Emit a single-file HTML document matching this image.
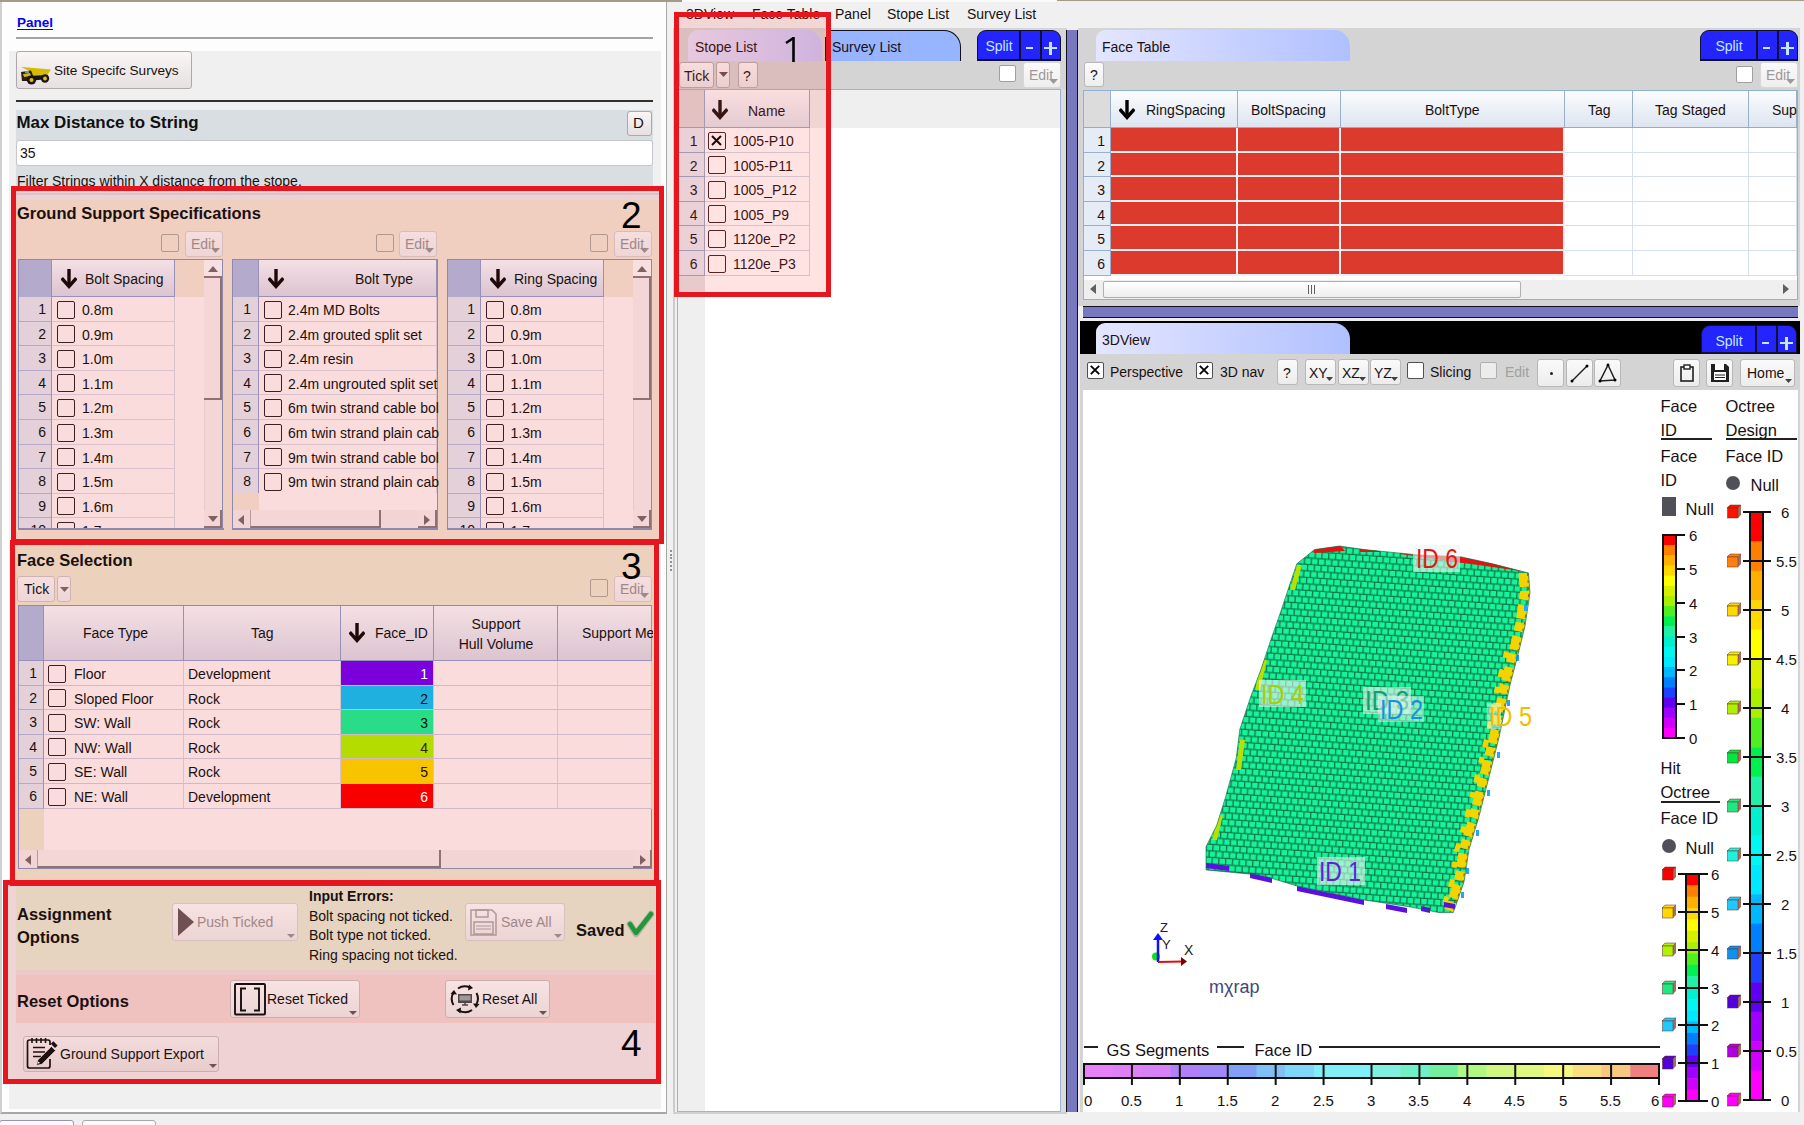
<!DOCTYPE html><html><head><meta charset="utf-8"><style>
*{margin:0;padding:0;box-sizing:border-box}
html,body{width:1804px;height:1125px;overflow:hidden;background:#f0f0f0;font-family:"Liberation Sans",sans-serif;font-size:14px;color:#1a1010}
div{position:absolute}
.t{white-space:nowrap;line-height:16px}
.b{font-weight:bold}
.btn{border:1px solid #b0a8a8;border-radius:3px;background:linear-gradient(#faf6f6,#e6e0e0)}
.cb{border:1.5px solid #3a2020;border-radius:2px}
.dd::after{content:"";position:absolute;right:2px;bottom:3px;border-left:4px solid transparent;border-right:4px solid transparent;border-top:4px solid #a09090}
</style></head><body>
<div style="left:0px;top:0px;width:682px;height:2px;background:#a49a86"></div>
<div style="left:682px;top:0px;width:375px;height:2px;background:#fafafa"></div>
<div style="left:1057px;top:0px;width:747px;height:1px;background:#a49a86"></div>
<div style="left:0px;top:2px;width:667px;height:1112px;background:#fdfdfd;border-right:1px solid #a8a8a8;border-left:2px solid #d0d0d0;border-bottom:2px solid #a8a8a8"></div>
<div class="t" style="left:17px;top:15px;color:#0000ff;font-weight:bold;font-size:13.5px;text-decoration:underline;text-underline-offset:2px">Panel</div>
<div style="left:16px;top:37px;width:637px;height:2px;background:#a0a4a4"></div>
<div style="left:9px;top:51px;width:652px;height:1058px;background:#f0f0f0"></div>
<div class="btn" style="left:16px;top:51px;width:176px;height:38px;"></div>
<div class="t" style="left:54px;top:63px;font-size:13.6px">Site Specifc Surveys</div>
<svg style="position:absolute;left:20px;top:66px" width="32" height="19" viewBox="0 0 32 19"><path d="M1 1 L8 1.5 L31 3.5 L26 11 L13 12 L9 5 Z" fill="#d4bc00"/><path d="M1 6 L11 4.5 L14 12 L13 15 L2 15 Z" fill="#2a1c1c"/><path d="M3 8 L10 7 L11 10 L4 11Z" fill="#d4bc00"/><path d="M5 5 L9 5 L9 7 L5 7Z" fill="#7090c0"/><path d="M8 10 L28 9 L28 13 L8 15Z" fill="#1c1414"/><circle cx="11.5" cy="14" r="4.6" fill="#1c1414"/><circle cx="11.5" cy="14" r="2" fill="#e0c400"/><circle cx="25" cy="12.5" r="4.2" fill="#1c1414"/><circle cx="25" cy="12.5" r="1.9" fill="#e0c400"/></svg>
<div style="left:16px;top:100px;width:637px;height:2px;background:#303030"></div>
<div style="left:16px;top:110px;width:637px;height:76px;background:#d8dee2"></div>
<div class="t" style="left:16.5px;top:113px;font-size:16.9px;font-weight:bold;line-height:20px;color:#101010">Max Distance to String</div>
<div class="btn" style="left:627px;top:111px;width:25px;height:25px;"></div>
<div class="t" style="left:633px;top:115px;font-size:15px">D</div>
<div style="left:16px;top:140px;width:637px;height:26px;background:#fff;border:1px solid #c4c8cc;border-radius:3px"></div>
<div class="t" style="left:20px;top:145px;font-size:14px">35</div>
<div class="t" style="left:17px;top:173px;font-size:14px">Filter Strings within X distance from the stope.</div>
<div style="left:16px;top:191px;width:643px;height:348px;background:#f0cfc0"></div>
<div style="left:16px;top:191px;width:643px;height:9px;background:#ecd2d4"></div>
<div style="left:16px;top:193px;width:643px;height:1.5px;background:#d8c4cc"></div>
<div class="t" style="left:17px;top:203px;font-size:16.5px;font-weight:bold;line-height:20px">Ground Support Specifications</div>
<div class="t" style="left:621px;top:197px;font-size:37px;line-height:37px;color:#000;z-index:5">2</div>
<div style="left:161px;top:234px;width:18px;height:18px;border:1.5px solid #b09890;border-radius:2px;background:transparent"></div>
<div style="left:185px;top:231px;width:38px;height:26px;background:linear-gradient(#f6dede,#eed6d6);border:1px solid #d8bcbc;border-radius:3px"></div><div class="t" style="left:191px;top:236px;color:#a08888;font-size:14px">Edit</div><svg style="position:absolute;left:211px;top:248px" width="9" height="5"><path d="M0 0 L9 0 L4.5 5Z" fill="#a08888"/></svg>
<div style="left:376px;top:234px;width:18px;height:18px;border:1.5px solid #b09890;border-radius:2px;background:transparent"></div>
<div style="left:399px;top:231px;width:38px;height:26px;background:linear-gradient(#f6dede,#eed6d6);border:1px solid #d8bcbc;border-radius:3px"></div><div class="t" style="left:405px;top:236px;color:#a08888;font-size:14px">Edit</div><svg style="position:absolute;left:425px;top:248px" width="9" height="5"><path d="M0 0 L9 0 L4.5 5Z" fill="#a08888"/></svg>
<div style="left:590px;top:234px;width:18px;height:18px;border:1.5px solid #b09890;border-radius:2px;background:transparent"></div>
<div style="left:614px;top:231px;width:38px;height:26px;background:linear-gradient(#f6dede,#eed6d6);border:1px solid #d8bcbc;border-radius:3px"></div><div class="t" style="left:620px;top:236px;color:#a08888;font-size:14px">Edit</div><svg style="position:absolute;left:640px;top:248px" width="9" height="5"><path d="M0 0 L9 0 L4.5 5Z" fill="#a08888"/></svg>
<div style="left:18px;top:259px;width:206px;height:271px;overflow:hidden;"><div style="left:-18px;top:-259px;width:1804px;height:1125px"><div style="left:18px;top:259px;width:205px;height:270px;background:#fadcdc;border:1px solid #8c88b0"></div><div style="left:18px;top:259px;width:205px;height:270px;background:#f0cfc0;border:1px solid #8c88b0;overflow:hidden"></div><div style="left:19px;top:260px;width:33px;height:37px;background:#b4aacc;border-right:1px solid #9890b8"></div><div style="left:52px;top:260px;width:123px;height:37px;background:linear-gradient(#f4e0e4,#dcc4d0);border-right:1px solid #9890b8;border-bottom:1px solid #9890b8"></div><svg style="position:absolute;left:61px;top:268px" width="16" height="22" viewBox="0 0 16 22"><path d="M8 1 V18" stroke="#200808" stroke-width="3.4"/><path d="M1.8 11.5 L8 18.5 L14.2 11.5" stroke="#200808" stroke-width="3.4" fill="none" stroke-linejoin="miter" stroke-linecap="square"/></svg><div class="t" style="left:85px;top:271px;font-size:14px">Bolt Spacing</div><div style="left:19px;top:297.0px;width:33px;height:24.6px;background:#e4d0d8;border-right:1px solid #9890b8;border-bottom:1px solid #b8a8c8"></div><div class="t" style="left:19px;top:301.0px;width:27px;text-align:right;font-size:14px">1</div><div style="left:52px;top:297.0px;width:123px;height:24.6px;background:#fadcdc;border-right:1px solid #d8c0cc;border-bottom:1px solid #d8c0cc"></div><div style="left:57px;top:300.5px;width:18px;height:18px;border:1.5px solid #3a2020;border-radius:2px;background:transparent"></div><div class="t" style="left:82px;top:302.0px;font-size:14px">0.8m</div><div style="left:19px;top:321.6px;width:33px;height:24.6px;background:#e4d0d8;border-right:1px solid #9890b8;border-bottom:1px solid #b8a8c8"></div><div class="t" style="left:19px;top:325.6px;width:27px;text-align:right;font-size:14px">2</div><div style="left:52px;top:321.6px;width:123px;height:24.6px;background:#fadcdc;border-right:1px solid #d8c0cc;border-bottom:1px solid #d8c0cc"></div><div style="left:57px;top:325.1px;width:18px;height:18px;border:1.5px solid #3a2020;border-radius:2px;background:transparent"></div><div class="t" style="left:82px;top:326.6px;font-size:14px">0.9m</div><div style="left:19px;top:346.2px;width:33px;height:24.6px;background:#e4d0d8;border-right:1px solid #9890b8;border-bottom:1px solid #b8a8c8"></div><div class="t" style="left:19px;top:350.2px;width:27px;text-align:right;font-size:14px">3</div><div style="left:52px;top:346.2px;width:123px;height:24.6px;background:#fadcdc;border-right:1px solid #d8c0cc;border-bottom:1px solid #d8c0cc"></div><div style="left:57px;top:349.7px;width:18px;height:18px;border:1.5px solid #3a2020;border-radius:2px;background:transparent"></div><div class="t" style="left:82px;top:351.2px;font-size:14px">1.0m</div><div style="left:19px;top:370.8px;width:33px;height:24.6px;background:#e4d0d8;border-right:1px solid #9890b8;border-bottom:1px solid #b8a8c8"></div><div class="t" style="left:19px;top:374.8px;width:27px;text-align:right;font-size:14px">4</div><div style="left:52px;top:370.8px;width:123px;height:24.6px;background:#fadcdc;border-right:1px solid #d8c0cc;border-bottom:1px solid #d8c0cc"></div><div style="left:57px;top:374.3px;width:18px;height:18px;border:1.5px solid #3a2020;border-radius:2px;background:transparent"></div><div class="t" style="left:82px;top:375.8px;font-size:14px">1.1m</div><div style="left:19px;top:395.4px;width:33px;height:24.6px;background:#e4d0d8;border-right:1px solid #9890b8;border-bottom:1px solid #b8a8c8"></div><div class="t" style="left:19px;top:399.4px;width:27px;text-align:right;font-size:14px">5</div><div style="left:52px;top:395.4px;width:123px;height:24.6px;background:#fadcdc;border-right:1px solid #d8c0cc;border-bottom:1px solid #d8c0cc"></div><div style="left:57px;top:398.9px;width:18px;height:18px;border:1.5px solid #3a2020;border-radius:2px;background:transparent"></div><div class="t" style="left:82px;top:400.4px;font-size:14px">1.2m</div><div style="left:19px;top:420.0px;width:33px;height:24.6px;background:#e4d0d8;border-right:1px solid #9890b8;border-bottom:1px solid #b8a8c8"></div><div class="t" style="left:19px;top:424.0px;width:27px;text-align:right;font-size:14px">6</div><div style="left:52px;top:420.0px;width:123px;height:24.6px;background:#fadcdc;border-right:1px solid #d8c0cc;border-bottom:1px solid #d8c0cc"></div><div style="left:57px;top:423.5px;width:18px;height:18px;border:1.5px solid #3a2020;border-radius:2px;background:transparent"></div><div class="t" style="left:82px;top:425.0px;font-size:14px">1.3m</div><div style="left:19px;top:444.6px;width:33px;height:24.6px;background:#e4d0d8;border-right:1px solid #9890b8;border-bottom:1px solid #b8a8c8"></div><div class="t" style="left:19px;top:448.6px;width:27px;text-align:right;font-size:14px">7</div><div style="left:52px;top:444.6px;width:123px;height:24.6px;background:#fadcdc;border-right:1px solid #d8c0cc;border-bottom:1px solid #d8c0cc"></div><div style="left:57px;top:448.1px;width:18px;height:18px;border:1.5px solid #3a2020;border-radius:2px;background:transparent"></div><div class="t" style="left:82px;top:449.6px;font-size:14px">1.4m</div><div style="left:19px;top:469.20000000000005px;width:33px;height:24.6px;background:#e4d0d8;border-right:1px solid #9890b8;border-bottom:1px solid #b8a8c8"></div><div class="t" style="left:19px;top:473.20000000000005px;width:27px;text-align:right;font-size:14px">8</div><div style="left:52px;top:469.20000000000005px;width:123px;height:24.6px;background:#fadcdc;border-right:1px solid #d8c0cc;border-bottom:1px solid #d8c0cc"></div><div style="left:57px;top:472.70000000000005px;width:18px;height:18px;border:1.5px solid #3a2020;border-radius:2px;background:transparent"></div><div class="t" style="left:82px;top:474.20000000000005px;font-size:14px">1.5m</div><div style="left:19px;top:493.8px;width:33px;height:24.6px;background:#e4d0d8;border-right:1px solid #9890b8;border-bottom:1px solid #b8a8c8"></div><div class="t" style="left:19px;top:497.8px;width:27px;text-align:right;font-size:14px">9</div><div style="left:52px;top:493.8px;width:123px;height:24.6px;background:#fadcdc;border-right:1px solid #d8c0cc;border-bottom:1px solid #d8c0cc"></div><div style="left:57px;top:497.3px;width:18px;height:18px;border:1.5px solid #3a2020;border-radius:2px;background:transparent"></div><div class="t" style="left:82px;top:498.8px;font-size:14px">1.6m</div><div style="left:19px;top:518.4px;width:33px;height:24.6px;background:#e4d0d8;border-right:1px solid #9890b8;border-bottom:1px solid #b8a8c8"></div><div class="t" style="left:19px;top:522.4px;width:27px;text-align:right;font-size:14px">10</div><div style="left:52px;top:518.4px;width:123px;height:24.6px;background:#fadcdc;border-right:1px solid #d8c0cc;border-bottom:1px solid #d8c0cc"></div><div style="left:57px;top:521.9px;width:18px;height:18px;border:1.5px solid #3a2020;border-radius:2px;background:transparent"></div><div class="t" style="left:82px;top:523.4px;font-size:14px">1.7m</div><div style="left:175px;top:260px;width:29px;height:37px;background:#f0cfc0"></div><div style="left:175px;top:297px;width:29px;height:232px;background:#fadcdc"></div><div style="left:204px;top:260px;width:18px;height:268px;background:#f4d6d6;border-left:1px solid #e8c8c8"></div><div style="left:204px;top:260px;width:18px;height:18px;background:#f8e0e0;border-bottom:2px solid #907070"></div><svg style="position:absolute;left:208px;top:266px" width="10" height="6"><path d="M0 6 L10 6 L5 0Z" fill="#806060"/></svg><div style="left:204px;top:278px;width:18px;height:122px;background:#f4d6d6;border-bottom:2px solid #907070;border-right:2px solid #907070"></div><div style="left:204px;top:510px;width:18px;height:18px;background:#f4d6d6;border-bottom:2px solid #907070;border-right:2px solid #907070"></div><svg style="position:absolute;left:208px;top:516px" width="10" height="6"><path d="M0 0 L10 0 L5 6Z" fill="#806060"/></svg></div></div>
<div style="left:18px;top:528px;width:206px;height:1.5px;background:#8c88b0"></div>
<div style="left:232px;top:259px;width:207px;height:271px;overflow:hidden;"><div style="left:-232px;top:-259px;width:1804px;height:1125px"><div style="left:232px;top:259px;width:206px;height:270px;background:#fadcdc;border:1px solid #8c88b0"></div><div style="left:232px;top:259px;width:206px;height:270px;background:#f0cfc0;border:1px solid #8c88b0;overflow:hidden"></div><div style="left:233px;top:260px;width:26px;height:37px;background:#b4aacc;border-right:1px solid #9890b8"></div><div style="left:259px;top:260px;width:178px;height:37px;background:linear-gradient(#f4e0e4,#dcc4d0);border-right:1px solid #9890b8;border-bottom:1px solid #9890b8"></div><svg style="position:absolute;left:268px;top:268px" width="16" height="22" viewBox="0 0 16 22"><path d="M8 1 V18" stroke="#200808" stroke-width="3.4"/><path d="M1.8 11.5 L8 18.5 L14.2 11.5" stroke="#200808" stroke-width="3.4" fill="none" stroke-linejoin="miter" stroke-linecap="square"/></svg><div class="t" style="left:355px;top:271px;font-size:14px">Bolt Type</div><div style="left:233px;top:297.0px;width:26px;height:24.6px;background:#e4d0d8;border-right:1px solid #9890b8;border-bottom:1px solid #b8a8c8"></div><div class="t" style="left:233px;top:301.0px;width:18px;text-align:right;font-size:14px">1</div><div style="left:259px;top:297.0px;width:178px;height:24.6px;background:#fadcdc;border-right:1px solid #d8c0cc;border-bottom:1px solid #d8c0cc"></div><div style="left:264px;top:300.5px;width:18px;height:18px;border:1.5px solid #3a2020;border-radius:2px;background:transparent"></div><div class="t" style="left:288px;top:302.0px;font-size:14px">2.4m MD Bolts</div><div style="left:233px;top:321.6px;width:26px;height:24.6px;background:#e4d0d8;border-right:1px solid #9890b8;border-bottom:1px solid #b8a8c8"></div><div class="t" style="left:233px;top:325.6px;width:18px;text-align:right;font-size:14px">2</div><div style="left:259px;top:321.6px;width:178px;height:24.6px;background:#fadcdc;border-right:1px solid #d8c0cc;border-bottom:1px solid #d8c0cc"></div><div style="left:264px;top:325.1px;width:18px;height:18px;border:1.5px solid #3a2020;border-radius:2px;background:transparent"></div><div class="t" style="left:288px;top:326.6px;font-size:14px">2.4m grouted split set</div><div style="left:233px;top:346.2px;width:26px;height:24.6px;background:#e4d0d8;border-right:1px solid #9890b8;border-bottom:1px solid #b8a8c8"></div><div class="t" style="left:233px;top:350.2px;width:18px;text-align:right;font-size:14px">3</div><div style="left:259px;top:346.2px;width:178px;height:24.6px;background:#fadcdc;border-right:1px solid #d8c0cc;border-bottom:1px solid #d8c0cc"></div><div style="left:264px;top:349.7px;width:18px;height:18px;border:1.5px solid #3a2020;border-radius:2px;background:transparent"></div><div class="t" style="left:288px;top:351.2px;font-size:14px">2.4m resin</div><div style="left:233px;top:370.8px;width:26px;height:24.6px;background:#e4d0d8;border-right:1px solid #9890b8;border-bottom:1px solid #b8a8c8"></div><div class="t" style="left:233px;top:374.8px;width:18px;text-align:right;font-size:14px">4</div><div style="left:259px;top:370.8px;width:178px;height:24.6px;background:#fadcdc;border-right:1px solid #d8c0cc;border-bottom:1px solid #d8c0cc"></div><div style="left:264px;top:374.3px;width:18px;height:18px;border:1.5px solid #3a2020;border-radius:2px;background:transparent"></div><div class="t" style="left:288px;top:375.8px;font-size:14px">2.4m ungrouted split set</div><div style="left:233px;top:395.4px;width:26px;height:24.6px;background:#e4d0d8;border-right:1px solid #9890b8;border-bottom:1px solid #b8a8c8"></div><div class="t" style="left:233px;top:399.4px;width:18px;text-align:right;font-size:14px">5</div><div style="left:259px;top:395.4px;width:178px;height:24.6px;background:#fadcdc;border-right:1px solid #d8c0cc;border-bottom:1px solid #d8c0cc"></div><div style="left:264px;top:398.9px;width:18px;height:18px;border:1.5px solid #3a2020;border-radius:2px;background:transparent"></div><div class="t" style="left:288px;top:400.4px;font-size:14px">6m twin strand cable bolt</div><div style="left:233px;top:420.0px;width:26px;height:24.6px;background:#e4d0d8;border-right:1px solid #9890b8;border-bottom:1px solid #b8a8c8"></div><div class="t" style="left:233px;top:424.0px;width:18px;text-align:right;font-size:14px">6</div><div style="left:259px;top:420.0px;width:178px;height:24.6px;background:#fadcdc;border-right:1px solid #d8c0cc;border-bottom:1px solid #d8c0cc"></div><div style="left:264px;top:423.5px;width:18px;height:18px;border:1.5px solid #3a2020;border-radius:2px;background:transparent"></div><div class="t" style="left:288px;top:425.0px;font-size:14px">6m twin strand plain cable</div><div style="left:233px;top:444.6px;width:26px;height:24.6px;background:#e4d0d8;border-right:1px solid #9890b8;border-bottom:1px solid #b8a8c8"></div><div class="t" style="left:233px;top:448.6px;width:18px;text-align:right;font-size:14px">7</div><div style="left:259px;top:444.6px;width:178px;height:24.6px;background:#fadcdc;border-right:1px solid #d8c0cc;border-bottom:1px solid #d8c0cc"></div><div style="left:264px;top:448.1px;width:18px;height:18px;border:1.5px solid #3a2020;border-radius:2px;background:transparent"></div><div class="t" style="left:288px;top:449.6px;font-size:14px">9m twin strand cable bolt</div><div style="left:233px;top:469.20000000000005px;width:26px;height:24.6px;background:#e4d0d8;border-right:1px solid #9890b8;border-bottom:1px solid #b8a8c8"></div><div class="t" style="left:233px;top:473.20000000000005px;width:18px;text-align:right;font-size:14px">8</div><div style="left:259px;top:469.20000000000005px;width:178px;height:24.6px;background:#fadcdc;border-right:1px solid #d8c0cc;border-bottom:1px solid #d8c0cc"></div><div style="left:264px;top:472.70000000000005px;width:18px;height:18px;border:1.5px solid #3a2020;border-radius:2px;background:transparent"></div><div class="t" style="left:288px;top:474.20000000000005px;font-size:14px">9m twin strand plain cable</div><div style="left:259px;top:493px;width:178px;height:18px;background:#fadcdc"></div><div style="left:233px;top:493px;width:26px;height:18px;background:#f0cfc0"></div><div style="left:233px;top:510px;width:204px;height:18px;background:#f2d4d4"></div><div style="left:250px;top:510px;width:131px;height:18px;background:#f4d6d6;border-left:1.5px solid #b89898;border-right:2px solid #907070;border-bottom:2px solid #907070"></div><div style="left:418px;top:510px;width:19px;height:18px;background:#f4d6d6;border-right:2px solid #907070;border-bottom:2px solid #907070"></div><svg style="position:absolute;left:238px;top:515px" width="6" height="10"><path d="M6 0 L6 10 L0 5Z" fill="#806060"/></svg><svg style="position:absolute;left:424px;top:515px" width="6" height="10"><path d="M0 0 L0 10 L6 5Z" fill="#806060"/></svg></div></div>
<div style="left:232px;top:528px;width:206px;height:1.5px;background:#8c88b0"></div>
<div style="left:447px;top:259px;width:206px;height:271px;overflow:hidden;"><div style="left:-447px;top:-259px;width:1804px;height:1125px"><div style="left:447px;top:259px;width:205px;height:270px;background:#fadcdc;border:1px solid #8c88b0"></div><div style="left:447px;top:259px;width:205px;height:270px;background:#f0cfc0;border:1px solid #8c88b0;overflow:hidden"></div><div style="left:448px;top:260px;width:33px;height:37px;background:#b4aacc;border-right:1px solid #9890b8"></div><div style="left:481px;top:260px;width:123px;height:37px;background:linear-gradient(#f4e0e4,#dcc4d0);border-right:1px solid #9890b8;border-bottom:1px solid #9890b8"></div><svg style="position:absolute;left:490px;top:268px" width="16" height="22" viewBox="0 0 16 22"><path d="M8 1 V18" stroke="#200808" stroke-width="3.4"/><path d="M1.8 11.5 L8 18.5 L14.2 11.5" stroke="#200808" stroke-width="3.4" fill="none" stroke-linejoin="miter" stroke-linecap="square"/></svg><div class="t" style="left:514px;top:271px;font-size:14px">Ring Spacing</div><div style="left:448px;top:297.0px;width:33px;height:24.6px;background:#e4d0d8;border-right:1px solid #9890b8;border-bottom:1px solid #b8a8c8"></div><div class="t" style="left:448px;top:301.0px;width:27px;text-align:right;font-size:14px">1</div><div style="left:481px;top:297.0px;width:123px;height:24.6px;background:#fadcdc;border-right:1px solid #d8c0cc;border-bottom:1px solid #d8c0cc"></div><div style="left:486px;top:300.5px;width:18px;height:18px;border:1.5px solid #3a2020;border-radius:2px;background:transparent"></div><div class="t" style="left:510.5px;top:302.0px;font-size:14px">0.8m</div><div style="left:448px;top:321.6px;width:33px;height:24.6px;background:#e4d0d8;border-right:1px solid #9890b8;border-bottom:1px solid #b8a8c8"></div><div class="t" style="left:448px;top:325.6px;width:27px;text-align:right;font-size:14px">2</div><div style="left:481px;top:321.6px;width:123px;height:24.6px;background:#fadcdc;border-right:1px solid #d8c0cc;border-bottom:1px solid #d8c0cc"></div><div style="left:486px;top:325.1px;width:18px;height:18px;border:1.5px solid #3a2020;border-radius:2px;background:transparent"></div><div class="t" style="left:510.5px;top:326.6px;font-size:14px">0.9m</div><div style="left:448px;top:346.2px;width:33px;height:24.6px;background:#e4d0d8;border-right:1px solid #9890b8;border-bottom:1px solid #b8a8c8"></div><div class="t" style="left:448px;top:350.2px;width:27px;text-align:right;font-size:14px">3</div><div style="left:481px;top:346.2px;width:123px;height:24.6px;background:#fadcdc;border-right:1px solid #d8c0cc;border-bottom:1px solid #d8c0cc"></div><div style="left:486px;top:349.7px;width:18px;height:18px;border:1.5px solid #3a2020;border-radius:2px;background:transparent"></div><div class="t" style="left:510.5px;top:351.2px;font-size:14px">1.0m</div><div style="left:448px;top:370.8px;width:33px;height:24.6px;background:#e4d0d8;border-right:1px solid #9890b8;border-bottom:1px solid #b8a8c8"></div><div class="t" style="left:448px;top:374.8px;width:27px;text-align:right;font-size:14px">4</div><div style="left:481px;top:370.8px;width:123px;height:24.6px;background:#fadcdc;border-right:1px solid #d8c0cc;border-bottom:1px solid #d8c0cc"></div><div style="left:486px;top:374.3px;width:18px;height:18px;border:1.5px solid #3a2020;border-radius:2px;background:transparent"></div><div class="t" style="left:510.5px;top:375.8px;font-size:14px">1.1m</div><div style="left:448px;top:395.4px;width:33px;height:24.6px;background:#e4d0d8;border-right:1px solid #9890b8;border-bottom:1px solid #b8a8c8"></div><div class="t" style="left:448px;top:399.4px;width:27px;text-align:right;font-size:14px">5</div><div style="left:481px;top:395.4px;width:123px;height:24.6px;background:#fadcdc;border-right:1px solid #d8c0cc;border-bottom:1px solid #d8c0cc"></div><div style="left:486px;top:398.9px;width:18px;height:18px;border:1.5px solid #3a2020;border-radius:2px;background:transparent"></div><div class="t" style="left:510.5px;top:400.4px;font-size:14px">1.2m</div><div style="left:448px;top:420.0px;width:33px;height:24.6px;background:#e4d0d8;border-right:1px solid #9890b8;border-bottom:1px solid #b8a8c8"></div><div class="t" style="left:448px;top:424.0px;width:27px;text-align:right;font-size:14px">6</div><div style="left:481px;top:420.0px;width:123px;height:24.6px;background:#fadcdc;border-right:1px solid #d8c0cc;border-bottom:1px solid #d8c0cc"></div><div style="left:486px;top:423.5px;width:18px;height:18px;border:1.5px solid #3a2020;border-radius:2px;background:transparent"></div><div class="t" style="left:510.5px;top:425.0px;font-size:14px">1.3m</div><div style="left:448px;top:444.6px;width:33px;height:24.6px;background:#e4d0d8;border-right:1px solid #9890b8;border-bottom:1px solid #b8a8c8"></div><div class="t" style="left:448px;top:448.6px;width:27px;text-align:right;font-size:14px">7</div><div style="left:481px;top:444.6px;width:123px;height:24.6px;background:#fadcdc;border-right:1px solid #d8c0cc;border-bottom:1px solid #d8c0cc"></div><div style="left:486px;top:448.1px;width:18px;height:18px;border:1.5px solid #3a2020;border-radius:2px;background:transparent"></div><div class="t" style="left:510.5px;top:449.6px;font-size:14px">1.4m</div><div style="left:448px;top:469.20000000000005px;width:33px;height:24.6px;background:#e4d0d8;border-right:1px solid #9890b8;border-bottom:1px solid #b8a8c8"></div><div class="t" style="left:448px;top:473.20000000000005px;width:27px;text-align:right;font-size:14px">8</div><div style="left:481px;top:469.20000000000005px;width:123px;height:24.6px;background:#fadcdc;border-right:1px solid #d8c0cc;border-bottom:1px solid #d8c0cc"></div><div style="left:486px;top:472.70000000000005px;width:18px;height:18px;border:1.5px solid #3a2020;border-radius:2px;background:transparent"></div><div class="t" style="left:510.5px;top:474.20000000000005px;font-size:14px">1.5m</div><div style="left:448px;top:493.8px;width:33px;height:24.6px;background:#e4d0d8;border-right:1px solid #9890b8;border-bottom:1px solid #b8a8c8"></div><div class="t" style="left:448px;top:497.8px;width:27px;text-align:right;font-size:14px">9</div><div style="left:481px;top:493.8px;width:123px;height:24.6px;background:#fadcdc;border-right:1px solid #d8c0cc;border-bottom:1px solid #d8c0cc"></div><div style="left:486px;top:497.3px;width:18px;height:18px;border:1.5px solid #3a2020;border-radius:2px;background:transparent"></div><div class="t" style="left:510.5px;top:498.8px;font-size:14px">1.6m</div><div style="left:448px;top:518.4px;width:33px;height:24.6px;background:#e4d0d8;border-right:1px solid #9890b8;border-bottom:1px solid #b8a8c8"></div><div class="t" style="left:448px;top:522.4px;width:27px;text-align:right;font-size:14px">10</div><div style="left:481px;top:518.4px;width:123px;height:24.6px;background:#fadcdc;border-right:1px solid #d8c0cc;border-bottom:1px solid #d8c0cc"></div><div style="left:486px;top:521.9px;width:18px;height:18px;border:1.5px solid #3a2020;border-radius:2px;background:transparent"></div><div class="t" style="left:510.5px;top:523.4px;font-size:14px">1.7m</div><div style="left:604px;top:260px;width:29px;height:37px;background:#f0cfc0"></div><div style="left:604px;top:297px;width:29px;height:232px;background:#fadcdc"></div><div style="left:633px;top:260px;width:18px;height:268px;background:#f4d6d6;border-left:1px solid #e8c8c8"></div><div style="left:633px;top:260px;width:18px;height:18px;background:#f8e0e0;border-bottom:2px solid #907070"></div><svg style="position:absolute;left:637px;top:266px" width="10" height="6"><path d="M0 6 L10 6 L5 0Z" fill="#806060"/></svg><div style="left:633px;top:278px;width:18px;height:122px;background:#f4d6d6;border-bottom:2px solid #907070;border-right:2px solid #907070"></div><div style="left:633px;top:510px;width:18px;height:18px;background:#f4d6d6;border-bottom:2px solid #907070;border-right:2px solid #907070"></div><svg style="position:absolute;left:637px;top:516px" width="10" height="6"><path d="M0 0 L10 0 L5 6Z" fill="#806060"/></svg></div></div>
<div style="left:447px;top:528px;width:205px;height:1.5px;background:#8c88b0"></div>
<div style="left:15px;top:545px;width:639px;height:336px;background:#ecd2bc"></div>
<div class="t" style="left:17px;top:550px;font-size:16.5px;font-weight:bold;line-height:20px">Face Selection</div>
<div class="t" style="left:621px;top:548px;font-size:37px;line-height:37px;color:#000;z-index:5">3</div>
<div style="left:17px;top:576px;width:38px;height:26px;background:linear-gradient(#f6dede,#eed6d6);border:1px solid #d0b4b4;border-radius:3px"></div>
<div class="t" style="left:24px;top:581px;font-size:14px">Tick</div>
<div style="left:57px;top:576px;width:14px;height:26px;background:linear-gradient(#f6dede,#eed6d6);border:1px solid #d0b4b4;border-radius:3px"></div>
<svg style="position:absolute;left:60px;top:587px" width="9" height="5"><path d="M0 0 L9 0 L4.5 5Z" fill="#806060"/></svg>
<div style="left:590px;top:579px;width:18px;height:18px;border:1.5px solid #b09890;border-radius:2px;background:transparent"></div>
<div style="left:614px;top:576px;width:38px;height:26px;background:linear-gradient(#f6dede,#eed6d6);border:1px solid #d8bcbc;border-radius:3px"></div><div class="t" style="left:620px;top:581px;color:#a08888;font-size:14px">Edit</div><svg style="position:absolute;left:640px;top:593px" width="9" height="5"><path d="M0 0 L9 0 L4.5 5Z" fill="#a08888"/></svg>
<div style="left:18px;top:605px;width:635px;height:264px;overflow:hidden;"><div style="left:-18px;top:-605px;width:1804px;height:1125px"><div style="left:18px;top:605px;width:634px;height:264px;background:#fadcdc;border:1px solid #8c88b0"></div><div style="left:19px;top:606px;width:25px;height:55px;background:#b4aacc;border-right:1px solid #9890b8;border-bottom:1px solid #9890b8"></div><div style="left:44px;top:606px;width:140px;height:55px;background:linear-gradient(#f4e0e4,#dcc4d0);border-right:1px solid #9890b8;border-bottom:1px solid #9890b8"></div><div style="left:184px;top:606px;width:157px;height:55px;background:linear-gradient(#f4e0e4,#dcc4d0);border-right:1px solid #9890b8;border-bottom:1px solid #9890b8"></div><div style="left:341px;top:606px;width:93px;height:55px;background:linear-gradient(#f4e0e4,#dcc4d0);border-right:1px solid #9890b8;border-bottom:1px solid #9890b8"></div><div style="left:434px;top:606px;width:124px;height:55px;background:linear-gradient(#f4e0e4,#dcc4d0);border-right:1px solid #9890b8;border-bottom:1px solid #9890b8"></div><div style="left:558px;top:606px;width:94px;height:55px;background:linear-gradient(#f4e0e4,#dcc4d0);border-right:1px solid #9890b8;border-bottom:1px solid #9890b8"></div><div class="t" style="left:83px;top:625px;">Face Type</div><div class="t" style="left:251px;top:625px;">Tag</div><svg style="position:absolute;left:349px;top:622px" width="16" height="22" viewBox="0 0 16 22"><path d="M8 1 V18" stroke="#200808" stroke-width="3.4"/><path d="M1.8 11.5 L8 18.5 L14.2 11.5" stroke="#200808" stroke-width="3.4" fill="none" stroke-linejoin="miter" stroke-linecap="square"/></svg><div class="t" style="left:375px;top:625px;">Face_ID</div><div class="t" style="left:434px;top:614px;width:124px;text-align:center;line-height:20px">Support<br>Hull Volume</div><div class="t" style="left:582px;top:625px;">Support Mesh</div><div style="left:19px;top:661.0px;width:25px;height:24.6px;background:#e4d0d8;border-right:1px solid #9890b8;border-bottom:1px solid #b8a8c8"></div><div class="t" style="left:19px;top:665.0px;width:18px;text-align:right">1</div><div style="left:44px;top:661.0px;width:140px;height:24.6px;background:#fadcdc;border-right:1px solid #d8c0cc;border-bottom:1px solid #d0b8c8"></div><div style="left:184px;top:661.0px;width:157px;height:24.6px;background:#fadcdc;border-right:1px solid #d8c0cc;border-bottom:1px solid #d0b8c8"></div><div style="left:341px;top:661.0px;width:93px;height:24.6px;background:#7a00dc;border-right:1px solid #d8c0cc;border-bottom:1px solid #d0b8c8"></div><div style="left:434px;top:661.0px;width:124px;height:24.6px;background:#fadcdc;border-right:1px solid #d8c0cc;border-bottom:1px solid #d0b8c8"></div><div style="left:558px;top:661.0px;width:94px;height:24.6px;background:#fadcdc;border-right:1px solid #d8c0cc;border-bottom:1px solid #d0b8c8"></div><div style="left:48px;top:664.5px;width:18px;height:18px;border:1.5px solid #3a2020;border-radius:2px;background:transparent"></div><div class="t" style="left:74px;top:666.0px;">Floor</div><div class="t" style="left:188px;top:666.0px;">Development</div><div class="t" style="left:341px;top:666.0px;width:87px;text-align:right;color:#fff">1</div><div style="left:19px;top:685.6px;width:25px;height:24.6px;background:#e4d0d8;border-right:1px solid #9890b8;border-bottom:1px solid #b8a8c8"></div><div class="t" style="left:19px;top:689.6px;width:18px;text-align:right">2</div><div style="left:44px;top:685.6px;width:140px;height:24.6px;background:#fadcdc;border-right:1px solid #d8c0cc;border-bottom:1px solid #d0b8c8"></div><div style="left:184px;top:685.6px;width:157px;height:24.6px;background:#fadcdc;border-right:1px solid #d8c0cc;border-bottom:1px solid #d0b8c8"></div><div style="left:341px;top:685.6px;width:93px;height:24.6px;background:#20b0e0;border-right:1px solid #d8c0cc;border-bottom:1px solid #d0b8c8"></div><div style="left:434px;top:685.6px;width:124px;height:24.6px;background:#fadcdc;border-right:1px solid #d8c0cc;border-bottom:1px solid #d0b8c8"></div><div style="left:558px;top:685.6px;width:94px;height:24.6px;background:#fadcdc;border-right:1px solid #d8c0cc;border-bottom:1px solid #d0b8c8"></div><div style="left:48px;top:689.1px;width:18px;height:18px;border:1.5px solid #3a2020;border-radius:2px;background:transparent"></div><div class="t" style="left:74px;top:690.6px;">Sloped Floor</div><div class="t" style="left:188px;top:690.6px;">Rock</div><div class="t" style="left:341px;top:690.6px;width:87px;text-align:right;color:#101010">2</div><div style="left:19px;top:710.2px;width:25px;height:24.6px;background:#e4d0d8;border-right:1px solid #9890b8;border-bottom:1px solid #b8a8c8"></div><div class="t" style="left:19px;top:714.2px;width:18px;text-align:right">3</div><div style="left:44px;top:710.2px;width:140px;height:24.6px;background:#fadcdc;border-right:1px solid #d8c0cc;border-bottom:1px solid #d0b8c8"></div><div style="left:184px;top:710.2px;width:157px;height:24.6px;background:#fadcdc;border-right:1px solid #d8c0cc;border-bottom:1px solid #d0b8c8"></div><div style="left:341px;top:710.2px;width:93px;height:24.6px;background:#28dc88;border-right:1px solid #d8c0cc;border-bottom:1px solid #d0b8c8"></div><div style="left:434px;top:710.2px;width:124px;height:24.6px;background:#fadcdc;border-right:1px solid #d8c0cc;border-bottom:1px solid #d0b8c8"></div><div style="left:558px;top:710.2px;width:94px;height:24.6px;background:#fadcdc;border-right:1px solid #d8c0cc;border-bottom:1px solid #d0b8c8"></div><div style="left:48px;top:713.7px;width:18px;height:18px;border:1.5px solid #3a2020;border-radius:2px;background:transparent"></div><div class="t" style="left:74px;top:715.2px;">SW: Wall</div><div class="t" style="left:188px;top:715.2px;">Rock</div><div class="t" style="left:341px;top:715.2px;width:87px;text-align:right;color:#101010">3</div><div style="left:19px;top:734.8px;width:25px;height:24.6px;background:#e4d0d8;border-right:1px solid #9890b8;border-bottom:1px solid #b8a8c8"></div><div class="t" style="left:19px;top:738.8px;width:18px;text-align:right">4</div><div style="left:44px;top:734.8px;width:140px;height:24.6px;background:#fadcdc;border-right:1px solid #d8c0cc;border-bottom:1px solid #d0b8c8"></div><div style="left:184px;top:734.8px;width:157px;height:24.6px;background:#fadcdc;border-right:1px solid #d8c0cc;border-bottom:1px solid #d0b8c8"></div><div style="left:341px;top:734.8px;width:93px;height:24.6px;background:#b4dc00;border-right:1px solid #d8c0cc;border-bottom:1px solid #d0b8c8"></div><div style="left:434px;top:734.8px;width:124px;height:24.6px;background:#fadcdc;border-right:1px solid #d8c0cc;border-bottom:1px solid #d0b8c8"></div><div style="left:558px;top:734.8px;width:94px;height:24.6px;background:#fadcdc;border-right:1px solid #d8c0cc;border-bottom:1px solid #d0b8c8"></div><div style="left:48px;top:738.3px;width:18px;height:18px;border:1.5px solid #3a2020;border-radius:2px;background:transparent"></div><div class="t" style="left:74px;top:739.8px;">NW: Wall</div><div class="t" style="left:188px;top:739.8px;">Rock</div><div class="t" style="left:341px;top:739.8px;width:87px;text-align:right;color:#302000">4</div><div style="left:19px;top:759.4px;width:25px;height:24.6px;background:#e4d0d8;border-right:1px solid #9890b8;border-bottom:1px solid #b8a8c8"></div><div class="t" style="left:19px;top:763.4px;width:18px;text-align:right">5</div><div style="left:44px;top:759.4px;width:140px;height:24.6px;background:#fadcdc;border-right:1px solid #d8c0cc;border-bottom:1px solid #d0b8c8"></div><div style="left:184px;top:759.4px;width:157px;height:24.6px;background:#fadcdc;border-right:1px solid #d8c0cc;border-bottom:1px solid #d0b8c8"></div><div style="left:341px;top:759.4px;width:93px;height:24.6px;background:#f8c400;border-right:1px solid #d8c0cc;border-bottom:1px solid #d0b8c8"></div><div style="left:434px;top:759.4px;width:124px;height:24.6px;background:#fadcdc;border-right:1px solid #d8c0cc;border-bottom:1px solid #d0b8c8"></div><div style="left:558px;top:759.4px;width:94px;height:24.6px;background:#fadcdc;border-right:1px solid #d8c0cc;border-bottom:1px solid #d0b8c8"></div><div style="left:48px;top:762.9px;width:18px;height:18px;border:1.5px solid #3a2020;border-radius:2px;background:transparent"></div><div class="t" style="left:74px;top:764.4px;">SE: Wall</div><div class="t" style="left:188px;top:764.4px;">Rock</div><div class="t" style="left:341px;top:764.4px;width:87px;text-align:right;color:#201000">5</div><div style="left:19px;top:784.0px;width:25px;height:24.6px;background:#e4d0d8;border-right:1px solid #9890b8;border-bottom:1px solid #b8a8c8"></div><div class="t" style="left:19px;top:788.0px;width:18px;text-align:right">6</div><div style="left:44px;top:784.0px;width:140px;height:24.6px;background:#fadcdc;border-right:1px solid #d8c0cc;border-bottom:1px solid #d0b8c8"></div><div style="left:184px;top:784.0px;width:157px;height:24.6px;background:#fadcdc;border-right:1px solid #d8c0cc;border-bottom:1px solid #d0b8c8"></div><div style="left:341px;top:784.0px;width:93px;height:24.6px;background:#f80000;border-right:1px solid #d8c0cc;border-bottom:1px solid #d0b8c8"></div><div style="left:434px;top:784.0px;width:124px;height:24.6px;background:#fadcdc;border-right:1px solid #d8c0cc;border-bottom:1px solid #d0b8c8"></div><div style="left:558px;top:784.0px;width:94px;height:24.6px;background:#fadcdc;border-right:1px solid #d8c0cc;border-bottom:1px solid #d0b8c8"></div><div style="left:48px;top:787.5px;width:18px;height:18px;border:1.5px solid #3a2020;border-radius:2px;background:transparent"></div><div class="t" style="left:74px;top:789.0px;">NE: Wall</div><div class="t" style="left:188px;top:789.0px;">Development</div><div class="t" style="left:341px;top:789.0px;width:87px;text-align:right;color:#fff">6</div><div style="left:19px;top:809px;width:25px;height:41px;background:#ecd2bc"></div><div style="left:19px;top:850px;width:632px;height:18px;background:#f2d4d4"></div><div style="left:37px;top:850px;width:404px;height:18px;background:#f4d6d6;border-left:1.5px solid #b89898;border-right:2px solid #907070;border-bottom:2px solid #907070"></div><div style="left:633px;top:850px;width:19px;height:18px;background:#f4d6d6;border-right:2px solid #907070;border-bottom:2px solid #907070"></div><svg style="position:absolute;left:25px;top:855px" width="6" height="10"><path d="M6 0 L6 10 L0 5Z" fill="#806060"/></svg><svg style="position:absolute;left:640px;top:855px" width="6" height="10"><path d="M0 0 L0 10 L6 5Z" fill="#806060"/></svg></div></div>
<div style="left:8px;top:885px;width:648px;height:195px;background:#eed4d4"></div>
<div style="left:16px;top:887px;width:639px;height:83px;background:#e6d4c0"></div>
<div class="t" style="left:17px;top:903px;font-size:16.5px;font-weight:bold;line-height:23px">Assignment<br>Options</div>
<div style="left:172px;top:903px;width:126px;height:38px;background:linear-gradient(#f8e2e2,#ecd4d4);border:1px solid #d8c0c0;border-radius:3px"></div>
<svg style="position:absolute;left:177px;top:907px" width="18" height="30"><path d="M1 1 L17 15 L1 29Z" fill="#705050"/></svg>
<div class="t" style="left:197px;top:914px;color:#a08888">Push Ticked</div>
<svg style="position:absolute;left:287px;top:934px" width="8" height="4"><path d="M0 0 L8 0 L4 4Z" fill="#a08888"/></svg>
<div class="t" style="left:309px;top:888px;font-weight:bold">Input Errors:</div>
<div class="t" style="left:309px;top:908px;">Bolt spacing not ticked.</div>
<div class="t" style="left:309px;top:927px;">Bolt type not ticked.</div>
<div class="t" style="left:309px;top:947px;">Ring spacing not ticked.</div>
<div style="left:465px;top:903px;width:100px;height:38px;background:linear-gradient(#f8e2e2,#ecd4d4);border:1px solid #d8c0c0;border-radius:3px"></div>
<svg style="position:absolute;left:470px;top:909px" width="27" height="27" viewBox="0 0 27 27"><path d="M1 1 H22 L26 5 V26 H1Z" fill="none" stroke="#b09898" stroke-width="1.5"/><rect x="6" y="1" width="12" height="7" fill="none" stroke="#b09898" stroke-width="1.5"/><rect x="4" y="13" width="19" height="12" fill="none" stroke="#b09898" stroke-width="1.5"/><path d="M6 17H21M6 20H21" stroke="#b09898"/></svg>
<div class="t" style="left:501px;top:914px;color:#a08888">Save All</div>
<svg style="position:absolute;left:554px;top:934px" width="8" height="4"><path d="M0 0 L8 0 L4 4Z" fill="#a08888"/></svg>
<div class="t" style="left:576px;top:920px;font-weight:bold;font-size:16.5px;line-height:20px">Saved</div>
<svg style="position:absolute;left:626px;top:910px" width="28" height="28" viewBox="0 0 28 28"><path d="M4 14 L10 24 L25 4" fill="none" stroke="#b8b0a8" stroke-width="6.5" stroke-linecap="round" stroke-linejoin="round"/><path d="M4 14 L10 23 L25 4" fill="none" stroke="#209838" stroke-width="4.5" stroke-linecap="round" stroke-linejoin="round"/></svg>
<div style="left:16px;top:970px;width:639px;height:5px;background:#eccaca"></div>
<div style="left:16px;top:975px;width:639px;height:48px;background:#f0c2bf"></div>
<div class="t" style="left:17px;top:991px;font-size:16.5px;font-weight:bold;line-height:20px">Reset Options</div>
<div style="left:230px;top:980px;width:130px;height:38px;background:linear-gradient(#f8e2e2,#ecd4d4);border:1px solid #c8b0b0;border-radius:3px"></div>
<svg style="position:absolute;left:233px;top:982px" width="34" height="34"><rect x="2" y="2" width="30" height="30.5" rx="1" fill="none" stroke="#181010" stroke-width="1.9"/><path d="M13 6.5 H8 V28.5 H13 M21 6.5 H26 V28.5 H21" fill="none" stroke="#181010" stroke-width="1.9"/></svg>
<div class="t" style="left:267px;top:991px;">Reset Ticked</div>
<svg style="position:absolute;left:349px;top:1011px" width="8" height="4"><path d="M0 0 L8 0 L4 4Z" fill="#705050"/></svg>
<div style="left:445px;top:980px;width:105px;height:38px;background:linear-gradient(#f8e2e2,#ecd4d4);border:1px solid #c8b0b0;border-radius:3px"></div>
<svg style="position:absolute;left:449px;top:983px" width="32" height="32" viewBox="0 0 32 32"><g fill="none" stroke="#181010" stroke-width="2"><path d="M9 5.5 A12 12 0 0 1 21 4.5"/><path d="M27.5 10 A12 12 0 0 1 27 22"/><path d="M23 27 A12 12 0 0 1 10 27.5"/><path d="M4.5 22 A12 12 0 0 1 5 9"/></g><g fill="#181010"><path d="M20 1.5 L24 5 L19 7.5Z"/><path d="M30.5 21 L27 25 L24 20.5Z"/><path d="M11.5 30.5 L7 27 L12 24.5Z"/><path d="M1.5 11 L5 7 L8 11.5Z"/></g><rect x="9" y="11" width="14" height="9" fill="#504848"/><rect x="10.5" y="12.5" width="11" height="5" fill="#a09898"/><path d="M13 22H19M16 20V22" stroke="#504848" stroke-width="1.5"/></svg>
<div class="t" style="left:482px;top:991px;">Reset All</div>
<svg style="position:absolute;left:539px;top:1011px" width="8" height="4"><path d="M0 0 L8 0 L4 4Z" fill="#705050"/></svg>
<div style="left:16px;top:1023px;width:639px;height:55px;background:#efd2d4"></div>
<div style="left:23px;top:1036px;width:196px;height:36px;background:linear-gradient(#f4dcdc,#e8cccc);border:1px solid #c8b0b0;border-radius:3px"></div>
<svg style="position:absolute;left:20px;top:1030px" width="45" height="45" viewBox="0 0 45 45"><path d="M30 15 V12 Q30 10 28 10 H9.5 Q7.5 10 7.5 12 V36 Q7.5 38 9.5 38 H28 Q30 38 30 36 V29" fill="none" stroke="#201010" stroke-width="1.7"/><path d="M12 8 V13 M16.5 8 V13 M21 8 V13 M25.5 8 V13" stroke="#201010" stroke-width="1.6"/><path d="M13 17.5 H25 M13 22 H25 M13 26.5 H21" stroke="#201010" stroke-width="1.6"/><path d="M16.5 35.5 L17.7 30.1 L31.4 16.4 L35.6 20.6 L21.9 34.3 Z" fill="#201010" stroke="#f4dcdc" stroke-width="0.8"/><path d="M30.8 13.8 L33.4 11.2 L37.6 15.4 L35 18 Z" fill="#201010"/><path d="M17.6 33.8 L18.3 31.4 L20 33.1Z" fill="#fff"/></svg>
<div class="t" style="left:60px;top:1046px;">Ground Support Export</div>
<svg style="position:absolute;left:209px;top:1064px" width="8" height="4"><path d="M0 0 L8 0 L4 4Z" fill="#705050"/></svg>
<div class="t" style="left:621px;top:1025px;font-size:37px;line-height:37px;color:#000;z-index:5">4</div>
<div style="left:-1px;top:1120px;width:75px;height:10px;background:#fbfbfb;border:1px solid #9a90b8;border-radius:3px"></div>
<div style="left:82px;top:1120px;width:74px;height:10px;background:#fbfbfb;border:1px solid #a8a8a8;border-radius:3px"></div>
<div style="left:11px;top:186px;width:653px;height:358px;border:5px solid #e5161e"></div>
<div style="left:10px;top:540px;width:649px;height:346px;border:5px solid #e5161e"></div>
<div style="left:3px;top:880px;width:658px;height:204px;border:5px solid #e5161e"></div>
<div style="left:668px;top:2px;width:1136px;height:26px;background:#f0f0f0"></div>
<div class="t" style="left:686px;top:6px;font-size:14px;color:#181010">3DView</div>
<div class="t" style="left:752px;top:6px;font-size:14px;color:#181010">Face Table</div>
<div class="t" style="left:835px;top:6px;font-size:14px;color:#181010">Panel</div>
<div class="t" style="left:887px;top:6px;font-size:14px;color:#181010">Stope List</div>
<div class="t" style="left:967px;top:6px;font-size:14px;color:#181010">Survey List</div>
<div style="left:668px;top:28px;width:399px;height:1084px;background:#f0f0f0"></div>
<div style="left:1060px;top:28px;width:6px;height:1084px;background:#dcdcdc"></div>
<div style="left:676px;top:28px;width:391px;height:33px;background:#d6d6d6"></div>
<div style="left:676px;top:61px;width:391px;height:28px;background:#d4d4d4"></div>
<div style="left:688px;top:30px;width:134px;height:31px;background:linear-gradient(90deg,#e4e0fa,#c8c8f8);border-radius:10px 16px 0 0"></div>
<div class="t" style="left:695px;top:39px;">Stope List</div>
<div style="left:826px;top:30px;width:135px;height:31px;background:#96b4ff;border:1.5px solid #101020;border-bottom:none;border-radius:0 17px 0 0"></div>
<div style="left:825px;top:37px;width:2px;height:24px;background:#101020"></div>
<div class="t" style="left:832px;top:39px;">Survey List</div>
<div style="left:977px;top:30px;width:84px;height:31px;background:#2424ff;border:1.5px solid #101030;border-bottom:2px solid #101030;border-radius:9px 9px 0 0"></div><div style="left:1019px;top:30px;width:1.6px;height:31px;background:#101030"></div><div style="left:1040px;top:30px;width:1.6px;height:31px;background:#101030"></div><div class="t" style="left:979px;top:38px;width:40px;text-align:center;color:#c0e8ff;font-size:14px">Split</div><div style="left:1026.0px;top:46.8px;width:7px;height:2.6px;background:#c0e8ff"></div><div style="left:1044.0px;top:46.7px;width:13px;height:2.6px;background:#c0e8ff"></div><div style="left:1049.2px;top:41.5px;width:2.6px;height:13px;background:#c0e8ff"></div>
<div style="left:679px;top:62px;width:35px;height:26px;background:linear-gradient(#f8f8f8,#e8e8e8);border:1px solid #b0b0b0;border-radius:3px"></div>
<div class="t" style="left:684px;top:68px;">Tick</div>
<div style="left:716px;top:62px;width:14px;height:26px;background:linear-gradient(#f8f8f8,#e8e8e8);border:1px solid #b0b0b0;border-radius:3px"></div>
<svg style="position:absolute;left:719px;top:72px" width="9" height="5"><path d="M0 0 L9 0 L4.5 5Z" fill="#605050"/></svg>
<div style="left:738px;top:62px;width:20px;height:26px;background:linear-gradient(#f8f8f8,#e8e8e8);border:1px solid #b0b0b0;border-radius:3px"></div>
<div class="t" style="left:743px;top:68px;">?</div>
<div style="left:999px;top:65px;width:17px;height:17px;border:1.5px solid #a0a0a0;border-radius:2px;background:#fff"></div>
<div style="left:1023px;top:62px;width:38px;height:26px;background:linear-gradient(#fafafa,#eeeeee);border:1px solid #d8d8d8;border-radius:3px"></div><div class="t" style="left:1029px;top:67px;color:#a09898;font-size:14px">Edit</div><svg style="position:absolute;left:1049px;top:79px" width="9" height="5"><path d="M0 0 L9 0 L4.5 5Z" fill="#a09898"/></svg>
<div style="left:673px;top:28px;width:2px;height:1086px;background:#cccccc"></div>
<div style="left:673px;top:1112px;width:394px;height:2px;background:#d0d0d0"></div>
<div style="left:670px;top:550.0px;width:1.5px;height:2px;background:#909090"></div>
<div style="left:670px;top:553.7px;width:1.5px;height:2px;background:#909090"></div>
<div style="left:670px;top:557.4px;width:1.5px;height:2px;background:#909090"></div>
<div style="left:670px;top:561.1px;width:1.5px;height:2px;background:#909090"></div>
<div style="left:670px;top:564.8px;width:1.5px;height:2px;background:#909090"></div>
<div style="left:670px;top:568.5px;width:1.5px;height:2px;background:#909090"></div>
<div style="left:677px;top:89px;width:384px;height:1023px;background:#fff;border:1px solid #9cb4d4"></div>
<div style="left:678px;top:90px;width:382px;height:38px;background:#efefef"></div>
<div style="left:678px;top:127px;width:27px;height:984px;background:#efefef"></div>
<div style="left:678px;top:90px;width:27px;height:38px;background:#e0d8d8;border-right:1px solid #98a8c8;border-bottom:1px solid #98a8c8"></div>
<div style="left:705px;top:90px;width:105px;height:38px;background:linear-gradient(#fafafa,#e0e4ec);border-right:1px solid #98a8c8;border-bottom:1px solid #98a8c8"></div>
<svg style="position:absolute;left:712px;top:99px" width="16" height="22" viewBox="0 0 16 22"><path d="M8 1 V18" stroke="#181010" stroke-width="3.4"/><path d="M1.8 11.5 L8 18.5 L14.2 11.5" stroke="#181010" stroke-width="3.4" fill="none" stroke-linejoin="miter" stroke-linecap="square"/></svg>
<div class="t" style="left:748px;top:103px;">Name</div>
<div style="left:678px;top:128.0px;width:27px;height:24.6px;background:#e6eaf2;border-right:1px solid #98a8c8;border-bottom:1px solid #98a8c8"></div>
<div class="t" style="left:678px;top:133.0px;width:19.5px;text-align:right">1</div>
<div style="left:705px;top:128.0px;width:105px;height:24.6px;background:#fff;border-right:1px solid #d0d8e4;border-bottom:1px solid #d0d8e4"></div>
<div style="left:708px;top:131.5px;width:18px;height:18px;border:1.5px solid #3a2020;border-radius:2px;background:transparent"><svg style="position:absolute;left:0;top:0" width="15" height="15" viewBox="0 0 15 15"><path d="M3 3 L12 12 M12 3 L3 12" stroke="#000" stroke-width="2"/></svg></div>
<div class="t" style="left:733px;top:133.0px;">1005-P10</div>
<div style="left:678px;top:152.6px;width:27px;height:24.6px;background:#e6eaf2;border-right:1px solid #98a8c8;border-bottom:1px solid #98a8c8"></div>
<div class="t" style="left:678px;top:157.6px;width:19.5px;text-align:right">2</div>
<div style="left:705px;top:152.6px;width:105px;height:24.6px;background:#fff;border-right:1px solid #d0d8e4;border-bottom:1px solid #d0d8e4"></div>
<div style="left:708px;top:156.1px;width:18px;height:18px;border:1.5px solid #3a2020;border-radius:2px;background:transparent"></div>
<div class="t" style="left:733px;top:157.6px;">1005-P11</div>
<div style="left:678px;top:177.2px;width:27px;height:24.6px;background:#e6eaf2;border-right:1px solid #98a8c8;border-bottom:1px solid #98a8c8"></div>
<div class="t" style="left:678px;top:182.2px;width:19.5px;text-align:right">3</div>
<div style="left:705px;top:177.2px;width:105px;height:24.6px;background:#fff;border-right:1px solid #d0d8e4;border-bottom:1px solid #d0d8e4"></div>
<div style="left:708px;top:180.7px;width:18px;height:18px;border:1.5px solid #3a2020;border-radius:2px;background:transparent"></div>
<div class="t" style="left:733px;top:182.2px;">1005_P12</div>
<div style="left:678px;top:201.8px;width:27px;height:24.6px;background:#e6eaf2;border-right:1px solid #98a8c8;border-bottom:1px solid #98a8c8"></div>
<div class="t" style="left:678px;top:206.8px;width:19.5px;text-align:right">4</div>
<div style="left:705px;top:201.8px;width:105px;height:24.6px;background:#fff;border-right:1px solid #d0d8e4;border-bottom:1px solid #d0d8e4"></div>
<div style="left:708px;top:205.3px;width:18px;height:18px;border:1.5px solid #3a2020;border-radius:2px;background:transparent"></div>
<div class="t" style="left:733px;top:206.8px;">1005_P9</div>
<div style="left:678px;top:226.4px;width:27px;height:24.6px;background:#e6eaf2;border-right:1px solid #98a8c8;border-bottom:1px solid #98a8c8"></div>
<div class="t" style="left:678px;top:231.4px;width:19.5px;text-align:right">5</div>
<div style="left:705px;top:226.4px;width:105px;height:24.6px;background:#fff;border-right:1px solid #d0d8e4;border-bottom:1px solid #d0d8e4"></div>
<div style="left:708px;top:229.9px;width:18px;height:18px;border:1.5px solid #3a2020;border-radius:2px;background:transparent"></div>
<div class="t" style="left:733px;top:231.4px;">1120e_P2</div>
<div style="left:678px;top:251.0px;width:27px;height:24.6px;background:#e6eaf2;border-right:1px solid #98a8c8;border-bottom:1px solid #98a8c8"></div>
<div class="t" style="left:678px;top:256.0px;width:19.5px;text-align:right">6</div>
<div style="left:705px;top:251.0px;width:105px;height:24.6px;background:#fff;border-right:1px solid #d0d8e4;border-bottom:1px solid #d0d8e4"></div>
<div style="left:708px;top:254.5px;width:18px;height:18px;border:1.5px solid #3a2020;border-radius:2px;background:transparent"></div>
<div class="t" style="left:733px;top:256.0px;">1120e_P3</div>
<div style="left:678px;top:276px;width:27px;height:21px;background:#e4e4e4"></div>
<div style="left:679px;top:17px;width:147px;height:275px;background:rgba(255,60,60,0.14)"></div>
<svg style="position:absolute;left:783px;top:36px" width="16" height="27"><path d="M10.5 1 V26" stroke="#000" stroke-width="2.6"/><path d="M10.5 2 L3 7" stroke="#000" stroke-width="2.4"/></svg>
<div style="left:674px;top:12px;width:157px;height:285px;border:5px solid #e5161e"></div>
<div style="left:1066px;top:30px;width:12px;height:1082px;background:#7878c0;border-left:1.5px solid #101018;border-right:1.5px solid #101018"></div>
<div style="left:1078px;top:28px;width:722px;height:278px;background:#d4d4d4"></div>
<div style="left:1096px;top:30px;width:254px;height:31px;background:linear-gradient(90deg,#e4e6ff,#b0c0ff);border-radius:9px 16px 0 0"></div>
<div class="t" style="left:1102px;top:39px;">Face Table</div>
<div style="left:1700px;top:30px;width:98px;height:31px;background:#2424ff;border:1.5px solid #101030;border-bottom:2px solid #101030;border-radius:9px 9px 0 0"></div><div style="left:1756px;top:30px;width:1.6px;height:31px;background:#101030"></div><div style="left:1777px;top:30px;width:1.6px;height:31px;background:#101030"></div><div class="t" style="left:1702px;top:38px;width:54px;text-align:center;color:#c0e8ff;font-size:14px">Split</div><div style="left:1763.0px;top:46.8px;width:7px;height:2.6px;background:#c0e8ff"></div><div style="left:1781.0px;top:46.7px;width:13px;height:2.6px;background:#c0e8ff"></div><div style="left:1786.2px;top:41.5px;width:2.6px;height:13px;background:#c0e8ff"></div>
<div style="left:1084px;top:62px;width:20px;height:25px;background:linear-gradient(#fcfcfc,#eeeeee);border:1px solid #b8b8b8;border-radius:3px"></div>
<div class="t" style="left:1090px;top:67px;">?</div>
<div style="left:1736px;top:66px;width:17px;height:17px;border:1.5px solid #a0a0a0;border-radius:2px;background:#fff"></div>
<div style="left:1760px;top:62px;width:38px;height:26px;background:linear-gradient(#fafafa,#eeeeee);border:1px solid #d8d8d8;border-radius:3px"></div><div class="t" style="left:1766px;top:67px;color:#a09898;font-size:14px">Edit</div><svg style="position:absolute;left:1786px;top:79px" width="9" height="5"><path d="M0 0 L9 0 L4.5 5Z" fill="#a09898"/></svg>
<div style="left:1083px;top:90px;width:715px;height:210px;background:#fff;border:1px solid #90b0d4"></div>
<div style="left:1084px;top:91px;width:27px;height:37px;background:#dcdcdc;border-right:1px solid #98b0cc;border-bottom:1px solid #90acd0"></div>
<div style="left:1111px;top:91px;width:127px;height:37px;background:linear-gradient(#fbfcfe,#dde5f0);border-right:1px solid #98b0cc;border-bottom:1px solid #90acd0"></div>
<div style="left:1238px;top:91px;width:103px;height:37px;background:linear-gradient(#fbfcfe,#dde5f0);border-right:1px solid #98b0cc;border-bottom:1px solid #90acd0"></div>
<div style="left:1341px;top:91px;width:224px;height:37px;background:linear-gradient(#fbfcfe,#dde5f0);border-right:1px solid #98b0cc;border-bottom:1px solid #90acd0"></div>
<div style="left:1565px;top:91px;width:68px;height:37px;background:linear-gradient(#fbfcfe,#dde5f0);border-right:1px solid #98b0cc;border-bottom:1px solid #90acd0"></div>
<div style="left:1633px;top:91px;width:116px;height:37px;background:linear-gradient(#fbfcfe,#dde5f0);border-right:1px solid #98b0cc;border-bottom:1px solid #90acd0"></div>
<div style="left:1749px;top:91px;width:48px;height:37px;background:linear-gradient(#fbfcfe,#dde5f0);border-right:1px solid #98b0cc;border-bottom:1px solid #90acd0"></div>
<div class="t" style="left:1146px;top:102px;">RingSpacing</div>
<div class="t" style="left:1251px;top:102px;">BoltSpacing</div>
<div class="t" style="left:1425px;top:102px;">BoltType</div>
<div class="t" style="left:1588px;top:102px;">Tag</div>
<div class="t" style="left:1655px;top:102px;">Tag Staged</div>
<div style="left:1749px;top:91px;width:48px;height:37px;overflow:hidden;"><div style="left:-1749px;top:-91px;width:1804px;height:1125px"><div class="t" style="left:1772px;top:102px;">Support</div></div></div>
<svg style="position:absolute;left:1119px;top:99px" width="16" height="22" viewBox="0 0 16 22"><path d="M8 1 V18" stroke="#000" stroke-width="3.4"/><path d="M1.8 11.5 L8 18.5 L14.2 11.5" stroke="#000" stroke-width="3.4" fill="none" stroke-linejoin="miter" stroke-linecap="square"/></svg>
<div style="left:1084px;top:128.0px;width:27px;height:24.6px;background:#e6ecf6;border-right:1px solid #98b0cc;border-bottom:1px solid #98b0cc"></div>
<div class="t" style="left:1084px;top:133.0px;width:21px;text-align:right">1</div>
<div style="left:1111px;top:128.0px;width:127px;height:24.6px;background:#dc3a2c;border-right:2px solid #f0f0f4;border-bottom:2px solid #f0f0f4"></div>
<div style="left:1238px;top:128.0px;width:103px;height:24.6px;background:#dc3a2c;border-right:2px solid #f0f0f4;border-bottom:2px solid #f0f0f4"></div>
<div style="left:1341px;top:128.0px;width:224px;height:24.6px;background:#dc3a2c;border-right:2px solid #f0f0f4;border-bottom:2px solid #f0f0f4"></div>
<div style="left:1565px;top:128.0px;width:68px;height:24.6px;background:#fff;border-right:1px solid #d4e0ee;border-bottom:1px solid #d4e0ee"></div>
<div style="left:1633px;top:128.0px;width:116px;height:24.6px;background:#fff;border-right:1px solid #d4e0ee;border-bottom:1px solid #d4e0ee"></div>
<div style="left:1749px;top:128.0px;width:48px;height:24.6px;background:#fff;border-right:1px solid #d4e0ee;border-bottom:1px solid #d4e0ee"></div>
<div style="left:1084px;top:152.6px;width:27px;height:24.6px;background:#e6ecf6;border-right:1px solid #98b0cc;border-bottom:1px solid #98b0cc"></div>
<div class="t" style="left:1084px;top:157.6px;width:21px;text-align:right">2</div>
<div style="left:1111px;top:152.6px;width:127px;height:24.6px;background:#dc3a2c;border-right:2px solid #f0f0f4;border-bottom:2px solid #f0f0f4"></div>
<div style="left:1238px;top:152.6px;width:103px;height:24.6px;background:#dc3a2c;border-right:2px solid #f0f0f4;border-bottom:2px solid #f0f0f4"></div>
<div style="left:1341px;top:152.6px;width:224px;height:24.6px;background:#dc3a2c;border-right:2px solid #f0f0f4;border-bottom:2px solid #f0f0f4"></div>
<div style="left:1565px;top:152.6px;width:68px;height:24.6px;background:#fff;border-right:1px solid #d4e0ee;border-bottom:1px solid #d4e0ee"></div>
<div style="left:1633px;top:152.6px;width:116px;height:24.6px;background:#fff;border-right:1px solid #d4e0ee;border-bottom:1px solid #d4e0ee"></div>
<div style="left:1749px;top:152.6px;width:48px;height:24.6px;background:#fff;border-right:1px solid #d4e0ee;border-bottom:1px solid #d4e0ee"></div>
<div style="left:1084px;top:177.2px;width:27px;height:24.6px;background:#e6ecf6;border-right:1px solid #98b0cc;border-bottom:1px solid #98b0cc"></div>
<div class="t" style="left:1084px;top:182.2px;width:21px;text-align:right">3</div>
<div style="left:1111px;top:177.2px;width:127px;height:24.6px;background:#dc3a2c;border-right:2px solid #f0f0f4;border-bottom:2px solid #f0f0f4"></div>
<div style="left:1238px;top:177.2px;width:103px;height:24.6px;background:#dc3a2c;border-right:2px solid #f0f0f4;border-bottom:2px solid #f0f0f4"></div>
<div style="left:1341px;top:177.2px;width:224px;height:24.6px;background:#dc3a2c;border-right:2px solid #f0f0f4;border-bottom:2px solid #f0f0f4"></div>
<div style="left:1565px;top:177.2px;width:68px;height:24.6px;background:#fff;border-right:1px solid #d4e0ee;border-bottom:1px solid #d4e0ee"></div>
<div style="left:1633px;top:177.2px;width:116px;height:24.6px;background:#fff;border-right:1px solid #d4e0ee;border-bottom:1px solid #d4e0ee"></div>
<div style="left:1749px;top:177.2px;width:48px;height:24.6px;background:#fff;border-right:1px solid #d4e0ee;border-bottom:1px solid #d4e0ee"></div>
<div style="left:1084px;top:201.8px;width:27px;height:24.6px;background:#e6ecf6;border-right:1px solid #98b0cc;border-bottom:1px solid #98b0cc"></div>
<div class="t" style="left:1084px;top:206.8px;width:21px;text-align:right">4</div>
<div style="left:1111px;top:201.8px;width:127px;height:24.6px;background:#dc3a2c;border-right:2px solid #f0f0f4;border-bottom:2px solid #f0f0f4"></div>
<div style="left:1238px;top:201.8px;width:103px;height:24.6px;background:#dc3a2c;border-right:2px solid #f0f0f4;border-bottom:2px solid #f0f0f4"></div>
<div style="left:1341px;top:201.8px;width:224px;height:24.6px;background:#dc3a2c;border-right:2px solid #f0f0f4;border-bottom:2px solid #f0f0f4"></div>
<div style="left:1565px;top:201.8px;width:68px;height:24.6px;background:#fff;border-right:1px solid #d4e0ee;border-bottom:1px solid #d4e0ee"></div>
<div style="left:1633px;top:201.8px;width:116px;height:24.6px;background:#fff;border-right:1px solid #d4e0ee;border-bottom:1px solid #d4e0ee"></div>
<div style="left:1749px;top:201.8px;width:48px;height:24.6px;background:#fff;border-right:1px solid #d4e0ee;border-bottom:1px solid #d4e0ee"></div>
<div style="left:1084px;top:226.4px;width:27px;height:24.6px;background:#e6ecf6;border-right:1px solid #98b0cc;border-bottom:1px solid #98b0cc"></div>
<div class="t" style="left:1084px;top:231.4px;width:21px;text-align:right">5</div>
<div style="left:1111px;top:226.4px;width:127px;height:24.6px;background:#dc3a2c;border-right:2px solid #f0f0f4;border-bottom:2px solid #f0f0f4"></div>
<div style="left:1238px;top:226.4px;width:103px;height:24.6px;background:#dc3a2c;border-right:2px solid #f0f0f4;border-bottom:2px solid #f0f0f4"></div>
<div style="left:1341px;top:226.4px;width:224px;height:24.6px;background:#dc3a2c;border-right:2px solid #f0f0f4;border-bottom:2px solid #f0f0f4"></div>
<div style="left:1565px;top:226.4px;width:68px;height:24.6px;background:#fff;border-right:1px solid #d4e0ee;border-bottom:1px solid #d4e0ee"></div>
<div style="left:1633px;top:226.4px;width:116px;height:24.6px;background:#fff;border-right:1px solid #d4e0ee;border-bottom:1px solid #d4e0ee"></div>
<div style="left:1749px;top:226.4px;width:48px;height:24.6px;background:#fff;border-right:1px solid #d4e0ee;border-bottom:1px solid #d4e0ee"></div>
<div style="left:1084px;top:251.0px;width:27px;height:24.6px;background:#e6ecf6;border-right:1px solid #98b0cc;border-bottom:1px solid #98b0cc"></div>
<div class="t" style="left:1084px;top:256.0px;width:21px;text-align:right">6</div>
<div style="left:1111px;top:251.0px;width:127px;height:24.6px;background:#dc3a2c;border-right:2px solid #f0f0f4;border-bottom:2px solid #f0f0f4"></div>
<div style="left:1238px;top:251.0px;width:103px;height:24.6px;background:#dc3a2c;border-right:2px solid #f0f0f4;border-bottom:2px solid #f0f0f4"></div>
<div style="left:1341px;top:251.0px;width:224px;height:24.6px;background:#dc3a2c;border-right:2px solid #f0f0f4;border-bottom:2px solid #f0f0f4"></div>
<div style="left:1565px;top:251.0px;width:68px;height:24.6px;background:#fff;border-right:1px solid #d4e0ee;border-bottom:1px solid #d4e0ee"></div>
<div style="left:1633px;top:251.0px;width:116px;height:24.6px;background:#fff;border-right:1px solid #d4e0ee;border-bottom:1px solid #d4e0ee"></div>
<div style="left:1749px;top:251.0px;width:48px;height:24.6px;background:#fff;border-right:1px solid #d4e0ee;border-bottom:1px solid #d4e0ee"></div>
<div style="left:1084px;top:280px;width:713px;height:19px;background:#efefef"></div>
<svg style="position:absolute;left:1090px;top:284px" width="6" height="10"><path d="M6 0 L6 10 L0 5Z" fill="#606060"/></svg>
<div style="left:1103px;top:281px;width:418px;height:17px;background:linear-gradient(#ffffff,#eeeeee);border:1px solid #b0b0b0;border-radius:2px"></div>
<div style="left:1308px;top:285px;width:1px;height:9px;background:#606060"></div>
<div style="left:1311px;top:285px;width:1px;height:9px;background:#606060"></div>
<div style="left:1314px;top:285px;width:1px;height:9px;background:#606060"></div>
<svg style="position:absolute;left:1783px;top:284px" width="6" height="10"><path d="M0 0 L0 10 L6 5Z" fill="#606060"/></svg>
<div style="left:1083px;top:306px;width:715px;height:12px;background:#7878c0;border-top:1.5px solid #101018;border-bottom:1.5px solid #101018"></div>
<div style="left:1080px;top:318px;width:720px;height:3px;background:#ececec"></div>
<div style="left:1080px;top:320.5px;width:720px;height:33.5px;background:#000"></div>
<div style="left:1096px;top:323px;width:254px;height:31px;background:linear-gradient(90deg,#e4e6ff,#b0c0ff);border-radius:9px 16px 0 0"></div>
<div class="t" style="left:1102px;top:332px;">3DView</div>
<div style="left:1701px;top:325px;width:96px;height:29px;background:#2424ff;border:1.5px solid #101030;border-bottom:2px solid #101030;border-radius:9px 9px 0 0"></div><div style="left:1755px;top:325px;width:1.6px;height:29px;background:#101030"></div><div style="left:1776px;top:325px;width:1.6px;height:29px;background:#101030"></div><div class="t" style="left:1703px;top:333px;width:52px;text-align:center;color:#c0e8ff;font-size:14px">Split</div><div style="left:1762.0px;top:341.8px;width:7px;height:2.6px;background:#c0e8ff"></div><div style="left:1780.0px;top:341.7px;width:13px;height:2.6px;background:#c0e8ff"></div><div style="left:1785.2px;top:336.5px;width:2.6px;height:13px;background:#c0e8ff"></div>
<div style="left:1080px;top:354px;width:720px;height:36px;background:#d4d4d4"></div>
<div style="left:1087px;top:362px;width:17px;height:17px;border:1px solid #505050;border-radius:2px;background:#fff"><svg style="position:absolute;left:0;top:0" width="14" height="14" viewBox="0 0 15 15"><path d="M3 3 L12 12 M12 3 L3 12" stroke="#000" stroke-width="2"/></svg></div>
<div class="t" style="left:1110px;top:364px;">Perspective</div>
<div style="left:1196px;top:362px;width:17px;height:17px;border:1px solid #505050;border-radius:2px;background:#fff"><svg style="position:absolute;left:0;top:0" width="14" height="14" viewBox="0 0 15 15"><path d="M3 3 L12 12 M12 3 L3 12" stroke="#000" stroke-width="2"/></svg></div>
<div class="t" style="left:1220px;top:364px;">3D nav</div>
<div style="left:1277px;top:359px;width:21px;height:26px;background:linear-gradient(#fafafa,#ececec);border:1px solid #b8b8b8;border-radius:3px"></div><div class="t" style="left:1283px;top:365px;">?</div>
<div style="left:1305px;top:359px;width:31px;height:26px;background:linear-gradient(#fafafa,#ececec);border:1px solid #b8b8b8;border-radius:3px"></div><div class="t" style="left:1309px;top:365px;">XY</div><svg style="position:absolute;left:1326px;top:377px" width="7" height="4"><path d="M0 0 L7 0 L3.5 4Z" fill="#404040"/></svg>
<div style="left:1338px;top:359px;width:31px;height:26px;background:linear-gradient(#fafafa,#ececec);border:1px solid #b8b8b8;border-radius:3px"></div><div class="t" style="left:1342px;top:365px;">XZ</div><svg style="position:absolute;left:1359px;top:377px" width="7" height="4"><path d="M0 0 L7 0 L3.5 4Z" fill="#404040"/></svg>
<div style="left:1370px;top:359px;width:31px;height:26px;background:linear-gradient(#fafafa,#ececec);border:1px solid #b8b8b8;border-radius:3px"></div><div class="t" style="left:1374px;top:365px;">YZ</div><svg style="position:absolute;left:1391px;top:377px" width="7" height="4"><path d="M0 0 L7 0 L3.5 4Z" fill="#404040"/></svg>
<div style="left:1407px;top:362px;width:17px;height:17px;border:1px solid #505050;border-radius:2px;background:#fff"></div>
<div class="t" style="left:1430px;top:364px;">Slicing</div>
<div style="left:1480px;top:362px;width:17px;height:17px;border:1px solid #b0b0b0;border-radius:2px;background:#ececec"></div>
<div class="t" style="left:1505px;top:364px;color:#a0a0a0">Edit</div>
<div style="left:1537px;top:359px;width:27px;height:28px;background:linear-gradient(#fafafa,#ececec);border:1px solid #b8b8b8;border-radius:3px"></div>
<div style="left:1550px;top:372px;width:3px;height:3px;background:#202020;border-radius:2px"></div>
<div style="left:1566px;top:359px;width:27px;height:28px;background:linear-gradient(#fafafa,#ececec);border:1px solid #b8b8b8;border-radius:3px"></div>
<svg style="position:absolute;left:1566px;top:359px" width="27" height="28"><path d="M6 22 L21 7" stroke="#202020" stroke-width="1.5"/><circle cx="6" cy="22" r="1.5"/><circle cx="21" cy="7" r="1.5"/></svg>
<div style="left:1594px;top:359px;width:27px;height:28px;background:linear-gradient(#fafafa,#ececec);border:1px solid #b8b8b8;border-radius:3px"></div>
<svg style="position:absolute;left:1594px;top:359px" width="27" height="28"><path d="M14 6 L21 21 L6 22 Z" fill="none" stroke="#202020" stroke-width="1.5"/><circle cx="14" cy="6" r="1.5"/><circle cx="21" cy="21" r="1.5"/><circle cx="6" cy="22" r="1.5"/></svg>
<div style="left:1673px;top:359px;width:27px;height:28px;background:linear-gradient(#fafafa,#ececec);border:1px solid #b8b8b8;border-radius:3px"></div>
<svg style="position:absolute;left:1673px;top:359px" width="27" height="28"><rect x="8" y="8" width="12" height="14" fill="none" stroke="#202020" stroke-width="1.6"/><rect x="11" y="6" width="6" height="4" fill="#fff" stroke="#202020" stroke-width="1.4"/></svg>
<div style="left:1706px;top:359px;width:27px;height:28px;background:linear-gradient(#fafafa,#ececec);border:1px solid #b8b8b8;border-radius:3px"></div>
<svg style="position:absolute;left:1706px;top:359px" width="27" height="28"><path d="M5 5 H20 L23 8 V23 H5Z" fill="#202020"/><rect x="9" y="5" width="9" height="6" fill="#fff"/><rect x="8" y="13" width="12" height="8" fill="#fff"/><path d="M9 16H19M9 18.5H19" stroke="#202020"/></svg>
<div style="left:1740px;top:359px;width:55px;height:28px;background:linear-gradient(#fafafa,#ececec);border:1px solid #b8b8b8;border-radius:3px"></div><div class="t" style="left:1747px;top:365px;">Home</div><svg style="position:absolute;left:1785px;top:379px" width="7" height="4"><path d="M0 0 L7 0 L3.5 4Z" fill="#404040"/></svg>
<div style="left:1080px;top:390px;width:720px;height:722px;background:#d4d4d4"></div>
<div style="left:1083px;top:390px;width:715px;height:722px;background:#fff"></div>
<div class="t" style="left:1662px;top:399px;font-size:16.5px;color:#181010;margin-left:-1.5px;margin-top:-1.5px">Face</div>
<div class="t" style="left:1662px;top:423px;font-size:16.5px;color:#181010;margin-left:-1.5px;margin-top:-1.5px">ID</div>
<div style="left:1661px;top:438px;width:51px;height:2px;background:#202020"></div>
<div class="t" style="left:1727px;top:399px;font-size:16.5px;color:#181010;margin-left:-1.5px;margin-top:-1.5px">Octree</div>
<div class="t" style="left:1727px;top:423px;font-size:16.5px;color:#181010;margin-left:-1.5px;margin-top:-1.5px">Design</div>
<div style="left:1726px;top:438px;width:71px;height:2px;background:#202020"></div>
<div class="t" style="left:1662px;top:449px;font-size:16.5px;color:#181010;margin-left:-1.5px;margin-top:-1.5px">Face</div>
<div class="t" style="left:1662px;top:473px;font-size:16.5px;color:#181010;margin-left:-1.5px;margin-top:-1.5px">ID</div>
<div class="t" style="left:1727px;top:449px;font-size:16.5px;color:#181010;margin-left:-1.5px;margin-top:-1.5px">Face ID</div>
<div style="left:1726px;top:476px;width:14px;height:14px;background:#505058;border-radius:50%"></div>
<div class="t" style="left:1752px;top:478px;font-size:16.5px;color:#181010;margin-left:-1.5px;margin-top:-1.5px">Null</div>
<div style="left:1662px;top:497px;width:14px;height:19px;background:#505058"></div>
<div class="t" style="left:1687px;top:502px;font-size:16.5px;color:#181010;margin-left:-1.5px;margin-top:-1.5px">Null</div>
<svg style="position:absolute;left:1662px;top:534px" width="15" height="205"><rect x="0" y="1.00" width="15" height="10.65" fill="#ff0000"/><rect x="0" y="11.15" width="15" height="10.65" fill="#ff8000"/><rect x="0" y="21.30" width="15" height="10.65" fill="#ffb000"/><rect x="0" y="31.45" width="15" height="10.65" fill="#ffd800"/><rect x="0" y="41.60" width="15" height="10.65" fill="#ffff00"/><rect x="0" y="51.75" width="15" height="10.65" fill="#d8f000"/><rect x="0" y="61.90" width="15" height="10.65" fill="#a8f000"/><rect x="0" y="72.05" width="15" height="10.65" fill="#50f020"/><rect x="0" y="82.20" width="15" height="10.65" fill="#00f050"/><rect x="0" y="92.35" width="15" height="10.65" fill="#20f0a8"/><rect x="0" y="102.50" width="15" height="10.65" fill="#00f0d0"/><rect x="0" y="112.65" width="15" height="10.65" fill="#00f8f0"/><rect x="0" y="122.80" width="15" height="10.65" fill="#00e8ff"/><rect x="0" y="132.95" width="15" height="10.65" fill="#00b8ff"/><rect x="0" y="143.10" width="15" height="10.65" fill="#0080ff"/><rect x="0" y="153.25" width="15" height="10.65" fill="#2040ff"/><rect x="0" y="163.40" width="15" height="10.65" fill="#6000f0"/><rect x="0" y="173.55" width="15" height="10.65" fill="#a000ff"/><rect x="0" y="183.70" width="15" height="10.65" fill="#d000ff"/><rect x="0" y="193.85" width="15" height="10.65" fill="#ff00ff"/><rect x="1" y="1" width="13" height="203" fill="none" stroke="#101010" stroke-width="2"/></svg><div style="left:1676px;top:534.0px;width:9px;height:2px;background:#101010"></div><div class="t" style="left:1689px;top:528.0px;font-size:15px;color:#181010">6</div><div style="left:1676px;top:567.8333333333334px;width:9px;height:2px;background:#101010"></div><div class="t" style="left:1689px;top:561.8333333333334px;font-size:15px;color:#181010">5</div><div style="left:1676px;top:601.6666666666666px;width:9px;height:2px;background:#101010"></div><div class="t" style="left:1689px;top:595.6666666666666px;font-size:15px;color:#181010">4</div><div style="left:1676px;top:635.5px;width:9px;height:2px;background:#101010"></div><div class="t" style="left:1689px;top:629.5px;font-size:15px;color:#181010">3</div><div style="left:1676px;top:669.3333333333334px;width:9px;height:2px;background:#101010"></div><div class="t" style="left:1689px;top:663.3333333333334px;font-size:15px;color:#181010">2</div><div style="left:1676px;top:703.1666666666666px;width:9px;height:2px;background:#101010"></div><div class="t" style="left:1689px;top:697.1666666666666px;font-size:15px;color:#181010">1</div><div style="left:1676px;top:737.0px;width:9px;height:2px;background:#101010"></div><div class="t" style="left:1689px;top:731.0px;font-size:15px;color:#181010">0</div>
<svg style="position:absolute;left:1749px;top:511px" width="15" height="590"><rect x="0" y="1.00" width="15" height="29.90" fill="#ff0000"/><rect x="0" y="30.40" width="15" height="29.90" fill="#ff8000"/><rect x="0" y="59.80" width="15" height="29.90" fill="#ffb000"/><rect x="0" y="89.20" width="15" height="29.90" fill="#ffd800"/><rect x="0" y="118.60" width="15" height="29.90" fill="#ffff00"/><rect x="0" y="148.00" width="15" height="29.90" fill="#d8f000"/><rect x="0" y="177.40" width="15" height="29.90" fill="#a8f000"/><rect x="0" y="206.80" width="15" height="29.90" fill="#50f020"/><rect x="0" y="236.20" width="15" height="29.90" fill="#00f050"/><rect x="0" y="265.60" width="15" height="29.90" fill="#20f0a8"/><rect x="0" y="295.00" width="15" height="29.90" fill="#00f0d0"/><rect x="0" y="324.40" width="15" height="29.90" fill="#00f8f0"/><rect x="0" y="353.80" width="15" height="29.90" fill="#00e8ff"/><rect x="0" y="383.20" width="15" height="29.90" fill="#00b8ff"/><rect x="0" y="412.60" width="15" height="29.90" fill="#0080ff"/><rect x="0" y="442.00" width="15" height="29.90" fill="#2040ff"/><rect x="0" y="471.40" width="15" height="29.90" fill="#6000f0"/><rect x="0" y="500.80" width="15" height="29.90" fill="#a000ff"/><rect x="0" y="530.20" width="15" height="29.90" fill="#d000ff"/><rect x="0" y="559.60" width="15" height="29.90" fill="#ff00ff"/><rect x="1" y="1" width="13" height="588" fill="none" stroke="#101010" stroke-width="2"/></svg><div style="left:1743px;top:511.0px;width:28px;height:2px;background:#101010"></div><div class="t" style="left:1781px;top:505.0px;font-size:15px;color:#181010">6</div><svg style="position:absolute;left:1727px;top:504.0px" width="15" height="15" viewBox="0 0 15 15"><path d="M0 4 L3 1 L14 1 L11 4Z" fill="#ff1000" stroke="#603020" stroke-width="0.5"/><path d="M11 4 L14 1 L14 11 L11 14Z" fill="#803020" opacity="0.7"/><rect x="0.5" y="4" width="10.5" height="10" fill="#ff1000" stroke="#603020" stroke-width="0.5"/></svg><div style="left:1743px;top:560.0px;width:28px;height:2px;background:#101010"></div><div class="t" style="left:1776px;top:554.0px;font-size:15px;color:#181010">5.5</div><svg style="position:absolute;left:1727px;top:553.0px" width="15" height="15" viewBox="0 0 15 15"><path d="M0 4 L3 1 L14 1 L11 4Z" fill="#ff8010" stroke="#603020" stroke-width="0.5"/><path d="M11 4 L14 1 L14 11 L11 14Z" fill="#803020" opacity="0.7"/><rect x="0.5" y="4" width="10.5" height="10" fill="#ff8010" stroke="#603020" stroke-width="0.5"/></svg><div style="left:1743px;top:609.0px;width:28px;height:2px;background:#101010"></div><div class="t" style="left:1781px;top:603.0px;font-size:15px;color:#181010">5</div><svg style="position:absolute;left:1727px;top:602.0px" width="15" height="15" viewBox="0 0 15 15"><path d="M0 4 L3 1 L14 1 L11 4Z" fill="#ffd800" stroke="#603020" stroke-width="0.5"/><path d="M11 4 L14 1 L14 11 L11 14Z" fill="#803020" opacity="0.7"/><rect x="0.5" y="4" width="10.5" height="10" fill="#ffd800" stroke="#603020" stroke-width="0.5"/></svg><div style="left:1743px;top:658.0px;width:28px;height:2px;background:#101010"></div><div class="t" style="left:1776px;top:652.0px;font-size:15px;color:#181010">4.5</div><svg style="position:absolute;left:1727px;top:651.0px" width="15" height="15" viewBox="0 0 15 15"><path d="M0 4 L3 1 L14 1 L11 4Z" fill="#f8f000" stroke="#603020" stroke-width="0.5"/><path d="M11 4 L14 1 L14 11 L11 14Z" fill="#803020" opacity="0.7"/><rect x="0.5" y="4" width="10.5" height="10" fill="#f8f000" stroke="#603020" stroke-width="0.5"/></svg><div style="left:1743px;top:707.0px;width:28px;height:2px;background:#101010"></div><div class="t" style="left:1781px;top:701.0px;font-size:15px;color:#181010">4</div><svg style="position:absolute;left:1727px;top:700.0px" width="15" height="15" viewBox="0 0 15 15"><path d="M0 4 L3 1 L14 1 L11 4Z" fill="#b0f000" stroke="#603020" stroke-width="0.5"/><path d="M11 4 L14 1 L14 11 L11 14Z" fill="#803020" opacity="0.7"/><rect x="0.5" y="4" width="10.5" height="10" fill="#b0f000" stroke="#603020" stroke-width="0.5"/></svg><div style="left:1743px;top:756.0px;width:28px;height:2px;background:#101010"></div><div class="t" style="left:1776px;top:750.0px;font-size:15px;color:#181010">3.5</div><svg style="position:absolute;left:1727px;top:749.0px" width="15" height="15" viewBox="0 0 15 15"><path d="M0 4 L3 1 L14 1 L11 4Z" fill="#00e840" stroke="#603020" stroke-width="0.5"/><path d="M11 4 L14 1 L14 11 L11 14Z" fill="#803020" opacity="0.7"/><rect x="0.5" y="4" width="10.5" height="10" fill="#00e840" stroke="#603020" stroke-width="0.5"/></svg><div style="left:1743px;top:805.0px;width:28px;height:2px;background:#101010"></div><div class="t" style="left:1781px;top:799.0px;font-size:15px;color:#181010">3</div><svg style="position:absolute;left:1727px;top:798.0px" width="15" height="15" viewBox="0 0 15 15"><path d="M0 4 L3 1 L14 1 L11 4Z" fill="#20e880" stroke="#603020" stroke-width="0.5"/><path d="M11 4 L14 1 L14 11 L11 14Z" fill="#803020" opacity="0.7"/><rect x="0.5" y="4" width="10.5" height="10" fill="#20e880" stroke="#603020" stroke-width="0.5"/></svg><div style="left:1743px;top:854.0px;width:28px;height:2px;background:#101010"></div><div class="t" style="left:1776px;top:848.0px;font-size:15px;color:#181010">2.5</div><svg style="position:absolute;left:1727px;top:847.0px" width="15" height="15" viewBox="0 0 15 15"><path d="M0 4 L3 1 L14 1 L11 4Z" fill="#20f0e0" stroke="#603020" stroke-width="0.5"/><path d="M11 4 L14 1 L14 11 L11 14Z" fill="#803020" opacity="0.7"/><rect x="0.5" y="4" width="10.5" height="10" fill="#20f0e0" stroke="#603020" stroke-width="0.5"/></svg><div style="left:1743px;top:903.0px;width:28px;height:2px;background:#101010"></div><div class="t" style="left:1781px;top:897.0px;font-size:15px;color:#181010">2</div><svg style="position:absolute;left:1727px;top:896.0px" width="15" height="15" viewBox="0 0 15 15"><path d="M0 4 L3 1 L14 1 L11 4Z" fill="#20c8ff" stroke="#603020" stroke-width="0.5"/><path d="M11 4 L14 1 L14 11 L11 14Z" fill="#803020" opacity="0.7"/><rect x="0.5" y="4" width="10.5" height="10" fill="#20c8ff" stroke="#603020" stroke-width="0.5"/></svg><div style="left:1743px;top:952.0px;width:28px;height:2px;background:#101010"></div><div class="t" style="left:1776px;top:946.0px;font-size:15px;color:#181010">1.5</div><svg style="position:absolute;left:1727px;top:945.0px" width="15" height="15" viewBox="0 0 15 15"><path d="M0 4 L3 1 L14 1 L11 4Z" fill="#1090f0" stroke="#603020" stroke-width="0.5"/><path d="M11 4 L14 1 L14 11 L11 14Z" fill="#803020" opacity="0.7"/><rect x="0.5" y="4" width="10.5" height="10" fill="#1090f0" stroke="#603020" stroke-width="0.5"/></svg><div style="left:1743px;top:1001.0px;width:28px;height:2px;background:#101010"></div><div class="t" style="left:1781px;top:995.0px;font-size:15px;color:#181010">1</div><svg style="position:absolute;left:1727px;top:994.0px" width="15" height="15" viewBox="0 0 15 15"><path d="M0 4 L3 1 L14 1 L11 4Z" fill="#5000e0" stroke="#603020" stroke-width="0.5"/><path d="M11 4 L14 1 L14 11 L11 14Z" fill="#803020" opacity="0.7"/><rect x="0.5" y="4" width="10.5" height="10" fill="#5000e0" stroke="#603020" stroke-width="0.5"/></svg><div style="left:1743px;top:1050.0px;width:28px;height:2px;background:#101010"></div><div class="t" style="left:1776px;top:1044.0px;font-size:15px;color:#181010">0.5</div><svg style="position:absolute;left:1727px;top:1043.0px" width="15" height="15" viewBox="0 0 15 15"><path d="M0 4 L3 1 L14 1 L11 4Z" fill="#b000e0" stroke="#603020" stroke-width="0.5"/><path d="M11 4 L14 1 L14 11 L11 14Z" fill="#803020" opacity="0.7"/><rect x="0.5" y="4" width="10.5" height="10" fill="#b000e0" stroke="#603020" stroke-width="0.5"/></svg><div style="left:1743px;top:1099.0px;width:28px;height:2px;background:#101010"></div><div class="t" style="left:1781px;top:1093.0px;font-size:15px;color:#181010">0</div><svg style="position:absolute;left:1727px;top:1092.0px" width="15" height="15" viewBox="0 0 15 15"><path d="M0 4 L3 1 L14 1 L11 4Z" fill="#ff00ff" stroke="#603020" stroke-width="0.5"/><path d="M11 4 L14 1 L14 11 L11 14Z" fill="#803020" opacity="0.7"/><rect x="0.5" y="4" width="10.5" height="10" fill="#ff00ff" stroke="#603020" stroke-width="0.5"/></svg>
<div class="t" style="left:1662px;top:761px;font-size:16.5px;color:#181010;margin-left:-1.5px;margin-top:-1.5px">Hit</div>
<div class="t" style="left:1662px;top:785px;font-size:16.5px;color:#181010;margin-left:-1.5px;margin-top:-1.5px">Octree</div>
<div style="left:1661px;top:801px;width:59px;height:2px;background:#202020"></div>
<div class="t" style="left:1662px;top:811px;font-size:16.5px;color:#181010;margin-left:-1.5px;margin-top:-1.5px">Face ID</div>
<div style="left:1662px;top:839px;width:14px;height:14px;background:#505058;border-radius:50%"></div>
<div class="t" style="left:1687px;top:841px;font-size:16.5px;color:#181010;margin-left:-1.5px;margin-top:-1.5px">Null</div>
<svg style="position:absolute;left:1685px;top:873px" width="15" height="229"><rect x="0" y="1.00" width="15" height="11.85" fill="#ff0000"/><rect x="0" y="12.35" width="15" height="11.85" fill="#ff8000"/><rect x="0" y="23.70" width="15" height="11.85" fill="#ffb000"/><rect x="0" y="35.05" width="15" height="11.85" fill="#ffd800"/><rect x="0" y="46.40" width="15" height="11.85" fill="#ffff00"/><rect x="0" y="57.75" width="15" height="11.85" fill="#d8f000"/><rect x="0" y="69.10" width="15" height="11.85" fill="#a8f000"/><rect x="0" y="80.45" width="15" height="11.85" fill="#50f020"/><rect x="0" y="91.80" width="15" height="11.85" fill="#00f050"/><rect x="0" y="103.15" width="15" height="11.85" fill="#20f0a8"/><rect x="0" y="114.50" width="15" height="11.85" fill="#00f0d0"/><rect x="0" y="125.85" width="15" height="11.85" fill="#00f8f0"/><rect x="0" y="137.20" width="15" height="11.85" fill="#00e8ff"/><rect x="0" y="148.55" width="15" height="11.85" fill="#00b8ff"/><rect x="0" y="159.90" width="15" height="11.85" fill="#0080ff"/><rect x="0" y="171.25" width="15" height="11.85" fill="#2040ff"/><rect x="0" y="182.60" width="15" height="11.85" fill="#6000f0"/><rect x="0" y="193.95" width="15" height="11.85" fill="#a000ff"/><rect x="0" y="205.30" width="15" height="11.85" fill="#d000ff"/><rect x="0" y="216.65" width="15" height="11.85" fill="#ff00ff"/><rect x="1" y="1" width="13" height="227" fill="none" stroke="#101010" stroke-width="2"/></svg><div style="left:1678px;top:873.0px;width:30px;height:2px;background:#101010"></div><div class="t" style="left:1711px;top:867.0px;font-size:15px;color:#181010">6</div><svg style="position:absolute;left:1662px;top:866.0px" width="15" height="15" viewBox="0 0 15 15"><path d="M0 4 L3 1 L14 1 L11 4Z" fill="#ff0000" stroke="#603020" stroke-width="0.5"/><path d="M11 4 L14 1 L14 11 L11 14Z" fill="#803020" opacity="0.7"/><rect x="0.5" y="4" width="10.5" height="10" fill="#ff0000" stroke="#603020" stroke-width="0.5"/></svg><div style="left:1678px;top:910.8333333333334px;width:30px;height:2px;background:#101010"></div><div class="t" style="left:1711px;top:904.8333333333334px;font-size:15px;color:#181010">5</div><svg style="position:absolute;left:1662px;top:903.8333333333334px" width="15" height="15" viewBox="0 0 15 15"><path d="M0 4 L3 1 L14 1 L11 4Z" fill="#ffd800" stroke="#603020" stroke-width="0.5"/><path d="M11 4 L14 1 L14 11 L11 14Z" fill="#803020" opacity="0.7"/><rect x="0.5" y="4" width="10.5" height="10" fill="#ffd800" stroke="#603020" stroke-width="0.5"/></svg><div style="left:1678px;top:948.6666666666666px;width:30px;height:2px;background:#101010"></div><div class="t" style="left:1711px;top:942.6666666666666px;font-size:15px;color:#181010">4</div><svg style="position:absolute;left:1662px;top:941.6666666666666px" width="15" height="15" viewBox="0 0 15 15"><path d="M0 4 L3 1 L14 1 L11 4Z" fill="#b0f000" stroke="#603020" stroke-width="0.5"/><path d="M11 4 L14 1 L14 11 L11 14Z" fill="#803020" opacity="0.7"/><rect x="0.5" y="4" width="10.5" height="10" fill="#b0f000" stroke="#603020" stroke-width="0.5"/></svg><div style="left:1678px;top:986.5px;width:30px;height:2px;background:#101010"></div><div class="t" style="left:1711px;top:980.5px;font-size:15px;color:#181010">3</div><svg style="position:absolute;left:1662px;top:979.5px" width="15" height="15" viewBox="0 0 15 15"><path d="M0 4 L3 1 L14 1 L11 4Z" fill="#20e880" stroke="#603020" stroke-width="0.5"/><path d="M11 4 L14 1 L14 11 L11 14Z" fill="#803020" opacity="0.7"/><rect x="0.5" y="4" width="10.5" height="10" fill="#20e880" stroke="#603020" stroke-width="0.5"/></svg><div style="left:1678px;top:1024.3333333333333px;width:30px;height:2px;background:#101010"></div><div class="t" style="left:1711px;top:1018.3333333333333px;font-size:15px;color:#181010">2</div><svg style="position:absolute;left:1662px;top:1017.3333333333333px" width="15" height="15" viewBox="0 0 15 15"><path d="M0 4 L3 1 L14 1 L11 4Z" fill="#20c8ff" stroke="#603020" stroke-width="0.5"/><path d="M11 4 L14 1 L14 11 L11 14Z" fill="#803020" opacity="0.7"/><rect x="0.5" y="4" width="10.5" height="10" fill="#20c8ff" stroke="#603020" stroke-width="0.5"/></svg><div style="left:1678px;top:1062.1666666666667px;width:30px;height:2px;background:#101010"></div><div class="t" style="left:1711px;top:1056.1666666666667px;font-size:15px;color:#181010">1</div><svg style="position:absolute;left:1662px;top:1055.1666666666667px" width="15" height="15" viewBox="0 0 15 15"><path d="M0 4 L3 1 L14 1 L11 4Z" fill="#5000e0" stroke="#603020" stroke-width="0.5"/><path d="M11 4 L14 1 L14 11 L11 14Z" fill="#803020" opacity="0.7"/><rect x="0.5" y="4" width="10.5" height="10" fill="#5000e0" stroke="#603020" stroke-width="0.5"/></svg><div style="left:1678px;top:1100.0px;width:30px;height:2px;background:#101010"></div><div class="t" style="left:1711px;top:1094.0px;font-size:15px;color:#181010">0</div><svg style="position:absolute;left:1662px;top:1093.0px" width="15" height="15" viewBox="0 0 15 15"><path d="M0 4 L3 1 L14 1 L11 4Z" fill="#ff00ff" stroke="#603020" stroke-width="0.5"/><path d="M11 4 L14 1 L14 11 L11 14Z" fill="#803020" opacity="0.7"/><rect x="0.5" y="4" width="10.5" height="10" fill="#ff00ff" stroke="#603020" stroke-width="0.5"/></svg>
<div style="left:1084px;top:1046px;width:14px;height:2px;background:#202020"></div>
<div class="t" style="left:1108px;top:1043.5px;font-size:16.5px;color:#181010;margin-left:-1.5px;margin-top:-1.5px">GS Segments</div>
<div style="left:1217px;top:1046px;width:27px;height:2px;background:#202020"></div>
<div class="t" style="left:1256px;top:1043.5px;font-size:16.5px;color:#181010;margin-left:-1.5px;margin-top:-1.5px">Face ID</div>
<div style="left:1319px;top:1046px;width:341px;height:2px;background:#202020"></div>
<svg style="position:absolute;left:1083px;top:1063px" width="578" height="24"><rect x="1.00" y="1" width="29.25" height="14" fill="#e880f8"/><rect x="29.75" y="1" width="29.25" height="14" fill="#e080f8"/><rect x="58.50" y="1" width="29.25" height="14" fill="#d880f8"/><rect x="87.25" y="1" width="29.25" height="14" fill="#b080f8"/><rect x="116.00" y="1" width="29.25" height="14" fill="#a088f8"/><rect x="144.75" y="1" width="29.25" height="14" fill="#80a0f8"/><rect x="173.50" y="1" width="29.25" height="14" fill="#80c0f8"/><rect x="202.25" y="1" width="29.25" height="14" fill="#80d8f8"/><rect x="231.00" y="1" width="29.25" height="14" fill="#80f0f8"/><rect x="259.75" y="1" width="29.25" height="14" fill="#80f0f8"/><rect x="288.50" y="1" width="29.25" height="14" fill="#80f0e0"/><rect x="317.25" y="1" width="29.25" height="14" fill="#70f0c8"/><rect x="346.00" y="1" width="29.25" height="14" fill="#70f0a0"/><rect x="374.75" y="1" width="29.25" height="14" fill="#b0f880"/><rect x="403.50" y="1" width="29.25" height="14" fill="#d0f880"/><rect x="432.25" y="1" width="29.25" height="14" fill="#e0f880"/><rect x="461.00" y="1" width="29.25" height="14" fill="#f8f880"/><rect x="489.75" y="1" width="29.25" height="14" fill="#f8e080"/><rect x="518.50" y="1" width="29.25" height="14" fill="#f8c880"/><rect x="547.25" y="1" width="29.25" height="14" fill="#f08080"/><rect x="1" y="1" width="575" height="14" fill="none" stroke="#101010" stroke-width="2"/><path d="M1.00 1 V22" stroke="#101010" stroke-width="2"/><path d="M48.92 1 V22" stroke="#101010" stroke-width="2"/><path d="M96.83 1 V22" stroke="#101010" stroke-width="2"/><path d="M144.75 1 V22" stroke="#101010" stroke-width="2"/><path d="M192.67 1 V22" stroke="#101010" stroke-width="2"/><path d="M240.58 1 V22" stroke="#101010" stroke-width="2"/><path d="M288.50 1 V22" stroke="#101010" stroke-width="2"/><path d="M336.42 1 V22" stroke="#101010" stroke-width="2"/><path d="M384.33 1 V22" stroke="#101010" stroke-width="2"/><path d="M432.25 1 V22" stroke="#101010" stroke-width="2"/><path d="M480.17 1 V22" stroke="#101010" stroke-width="2"/><path d="M528.08 1 V22" stroke="#101010" stroke-width="2"/><path d="M576.00 1 V22" stroke="#101010" stroke-width="2"/></svg>
<div class="t" style="left:1084px;top:1093px;font-size:15px;color:#181010">0</div>
<div class="t" style="left:1121px;top:1093px;font-size:15px;color:#181010">0.5</div>
<div class="t" style="left:1175px;top:1093px;font-size:15px;color:#181010">1</div>
<div class="t" style="left:1217px;top:1093px;font-size:15px;color:#181010">1.5</div>
<div class="t" style="left:1271px;top:1093px;font-size:15px;color:#181010">2</div>
<div class="t" style="left:1313px;top:1093px;font-size:15px;color:#181010">2.5</div>
<div class="t" style="left:1367px;top:1093px;font-size:15px;color:#181010">3</div>
<div class="t" style="left:1408px;top:1093px;font-size:15px;color:#181010">3.5</div>
<div class="t" style="left:1463px;top:1093px;font-size:15px;color:#181010">4</div>
<div class="t" style="left:1504px;top:1093px;font-size:15px;color:#181010">4.5</div>
<div class="t" style="left:1559px;top:1093px;font-size:15px;color:#181010">5</div>
<div class="t" style="left:1600px;top:1093px;font-size:15px;color:#181010">5.5</div>
<div class="t" style="left:1651px;top:1093px;font-size:15px;color:#181010">6</div>
<svg style="position:absolute;left:1140px;top:915px" width="70" height="60"><circle cx="16" cy="41.5" r="4" fill="#10e020"/><path d="M18 47 V22" stroke="#1010ff" stroke-width="2.5"/><path d="M13 25 L18 18 L23 25Z" fill="#1010ff"/><path d="M18 47 L43 46.5" stroke="#e01010" stroke-width="2"/><path d="M41 42 L47 46.5 L41 51Z" fill="#800000"/></svg>
<div class="t" style="left:1160px;top:920px;font-size:13px;color:#202020">Z</div>
<div class="t" style="left:1162px;top:937px;font-size:13px;color:#202020">Y</div>
<div class="t" style="left:1184px;top:942px;font-size:14px;color:#202020">X</div>
<div class="t" style="left:1209px;top:977px;font-size:18px;color:#404878;line-height:20px">m&#967;rap</div>
<svg style="position:absolute;left:1180px;top:530px" width="380" height="400"><defs><pattern id="vox" width="6.8" height="13" patternUnits="userSpaceOnUse" patternTransform="rotate(4)"><rect width="6.8" height="13" fill="#127448"/><rect x="1.3" y="0" width="5.5" height="5.3" fill="#14f49a"/><rect x="4.7" y="6.5" width="5.5" height="5.3" fill="#14f49a"/><rect x="-2.1" y="6.5" width="5.5" height="5.3" fill="#14f49a"/></pattern><clipPath id="cp"><polygon points="134.5,19.600000000000023 159.5,16 184.4000000000001,19.600000000000023 237.79999999999995,24.899999999999977 280.5,26.700000000000045 312.5,33.799999999999955 348.5,43 350,63 345,96 338.70000000000005,122 330,155 319,207.60000000000002 310.70000000000005,240.5 299,286.6 289,319.5 284,352 276,375 273.29999999999995,382.6 259,382.6 230.5999999999999,377 184.4000000000001,370 159.5,364.79999999999995 116.79999999999995,355.9 81.20000000000005,345.20000000000005 26,339.9 26,316.70000000000005 36.700000000000045,295.4 45.59999999999991,266.9 56.299999999999955,227.79999999999995 59.799999999999955,199.29999999999995 70.5,167.29999999999995 81.20000000000005,138.79999999999995 91.90000000000009,106.79999999999995 100.70000000000005,81.79999999999995 106,65.79999999999995 111.40000000000009,49.799999999999955 116.79999999999995,33.799999999999955"/></clipPath></defs><polygon points="134.5,19.600000000000023 159.5,16 184.4000000000001,19.600000000000023 237.79999999999995,24.899999999999977 280.5,26.700000000000045 312.5,33.799999999999955 348.5,43 350,63 345,96 338.70000000000005,122 330,155 319,207.60000000000002 310.70000000000005,240.5 299,286.6 289,319.5 284,352 276,375 273.29999999999995,382.6 259,382.6 230.5999999999999,377 184.4000000000001,370 159.5,364.79999999999995 116.79999999999995,355.9 81.20000000000005,345.20000000000005 26,339.9 26,316.70000000000005 36.700000000000045,295.4 45.59999999999991,266.9 56.299999999999955,227.79999999999995 59.799999999999955,199.29999999999995 70.5,167.29999999999995 81.20000000000005,138.79999999999995 91.90000000000009,106.79999999999995 100.70000000000005,81.79999999999995 106,65.79999999999995 111.40000000000009,49.799999999999955 116.79999999999995,33.799999999999955" fill="url(#vox)"/><g clip-path="url(#cp)"><polyline points="343.5,43 345,63 340,96 333.70000000000005,122 325,155 314,207.60000000000002 305.70000000000005,240.5 294,286.6 284,319.5 279,352 271,375 268.29999999999995,382.6" stroke="#f4d400" stroke-width="10" fill="none" stroke-dasharray="14 4 9 5"/><polyline points="326.70000000000005,122 318,155 307,207.60000000000002 298.70000000000005,240.5 287,286.6 277,319.5 272,352 264,375 261.29999999999995,382.6" stroke="#f4d400" stroke-width="5" fill="none" stroke-dasharray="6 12 8 10"/><polyline points="347.5,43 349,63 344,96 337.70000000000005,122 329,155 318,207.60000000000002 309.70000000000005,240.5 298,286.6 288,319.5 283,352 275,375 272.29999999999995,382.6" stroke="#8a7000" stroke-width="1.2" fill="none" stroke-dasharray="3 4"/><polygon points="134,16 160,15 165,21 134,23" fill="#e81010"/><polygon points="180,16 200,16 200,22 180,22" fill="#e81010"/><polygon points="220,19 348,36 348,42 220,24" fill="#e81010"/></g><rect x="344" y="75" width="3" height="6" fill="#20a8f0"/><rect x="336" y="125" width="3" height="6" fill="#20a8f0"/><rect x="327" y="170" width="3" height="6" fill="#20a8f0"/><rect x="317" y="222" width="3" height="6" fill="#20a8f0"/><rect x="307" y="260" width="3" height="6" fill="#20a8f0"/><rect x="296" y="300" width="3" height="6" fill="#20a8f0"/><rect x="286" y="338" width="3" height="6" fill="#20a8f0"/><rect x="281" y="362" width="3" height="6" fill="#20a8f0"/><polygon points="26,333 49,336 49,341 26,338" fill="#5a10e0"/><polygon points="70,343 92,348 92,353 70,348" fill="#5a10e0"/><polygon points="117,356 184,370 184,375 117,361" fill="#5a10e0"/><polygon points="206,374 227,378 227,383 206,379" fill="#5a10e0"/><polygon points="241,376 250,378 250,383 241,381" fill="#5a10e0"/><polygon points="264,372 275,374 275,379 264,377" fill="#5a10e0"/><g clip-path="url(#cp)"><polygon points="82,130 87,130 80,160 75,160" fill="#b8e000"/><polygon points="60,210 65,210 61,240 56,240" fill="#b8e000"/><polygon points="38,285 43,285 37,310 32,310" fill="#b8e000"/><polygon points="117,35 122,35 115,60 110,60" fill="#b8e000"/></g><polygon points="134.5,19.600000000000023 159.5,16 184.4000000000001,19.600000000000023 237.79999999999995,24.899999999999977 280.5,26.700000000000045 312.5,33.799999999999955 348.5,43 350,63 345,96 338.70000000000005,122 330,155 319,207.60000000000002 310.70000000000005,240.5 299,286.6 289,319.5 284,352 276,375 273.29999999999995,382.6 259,382.6 230.5999999999999,377 184.4000000000001,370 159.5,364.79999999999995 116.79999999999995,355.9 81.20000000000005,345.20000000000005 26,339.9 26,316.70000000000005 36.700000000000045,295.4 45.59999999999991,266.9 56.299999999999955,227.79999999999995 59.799999999999955,199.29999999999995 70.5,167.29999999999995 81.20000000000005,138.79999999999995 91.90000000000009,106.79999999999995 100.70000000000005,81.79999999999995 106,65.79999999999995 111.40000000000009,49.799999999999955 116.79999999999995,33.799999999999955" fill="none" stroke="#106848" stroke-width="1" opacity="0.6"/></svg>
<div style="left:1413px;top:545px;width:47px;height:27px;background:rgba(235,245,240,0.6)"></div><svg style="position:absolute;left:1416px;top:546px" width="46" height="28"><text x="0" y="22" font-family="Liberation Sans" font-size="27" fill="#e01818" textLength="42" lengthAdjust="spacingAndGlyphs">ID 6</text></svg>
<div style="left:1259px;top:680px;width:47px;height:27px;background:rgba(235,245,240,0.6)"></div><svg style="position:absolute;left:1261px;top:682px" width="47" height="28"><text x="0" y="22" font-family="Liberation Sans" font-size="27" fill="#a8d000" textLength="43" lengthAdjust="spacingAndGlyphs">ID 4</text></svg>
<div style="left:1363px;top:687px;width:48px;height:27px;background:rgba(235,245,240,0.6)"></div><svg style="position:absolute;left:1365px;top:688px" width="48" height="28"><text x="0" y="22" font-family="Liberation Sans" font-size="27" fill="#10a070" textLength="44" lengthAdjust="spacingAndGlyphs">ID 3</text></svg>
<div style="left:1378px;top:696px;width:46px;height:26px;background:rgba(235,245,240,0.5)"></div><svg style="position:absolute;left:1380px;top:697px" width="47" height="28"><text x="0" y="22" font-family="Liberation Sans" font-size="27" fill="#1890e0" textLength="43" lengthAdjust="spacingAndGlyphs">ID 2</text></svg>
<div style="left:1487px;top:703px;width:14px;height:26px;background:rgba(235,245,240,0.5)"></div><svg style="position:absolute;left:1489px;top:704px" width="47" height="28"><text x="0" y="22" font-family="Liberation Sans" font-size="27" fill="#f0c000" textLength="43" lengthAdjust="spacingAndGlyphs">ID 5</text></svg>
<div style="left:1317px;top:857px;width:48px;height:28px;background:rgba(235,245,240,0.6)"></div><svg style="position:absolute;left:1319px;top:859px" width="46" height="28"><text x="0" y="22" font-family="Liberation Sans" font-size="27" fill="#6020e0" textLength="42" lengthAdjust="spacingAndGlyphs">ID 1</text></svg>
</body></html>
